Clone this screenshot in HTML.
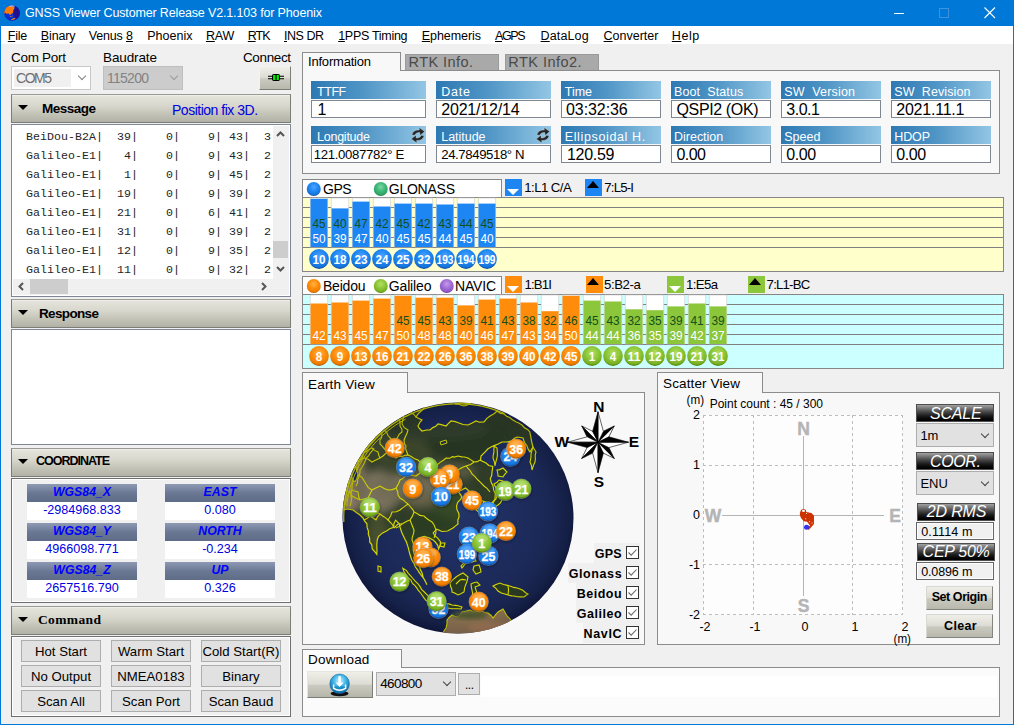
<!DOCTYPE html>
<html><head><meta charset="utf-8"><title>GNSS Viewer</title><style>
*{box-sizing:border-box;margin:0;padding:0}
html,body{width:1014px;height:725px;overflow:hidden;background:#f0f0f0;font-family:"Liberation Sans",sans-serif;font-size:13px;color:#000}
.a{position:absolute}
.t{position:absolute;white-space:nowrap;line-height:1}
u{text-decoration:underline;text-underline-offset:1px}
.hdr{position:absolute;left:11px;width:280px;height:29px;border:1px solid #7d7d78;border-top-color:#9a9a94;background:linear-gradient(#e6e5dd 0%,#d8d7cd 40%,#c4c3b7 70%,#b2b1a5 100%);box-shadow:inset 0 1px 0 #efeee8}
.tri{position:absolute;left:6px;top:10px;width:0;height:0;border-left:5.2px solid transparent;border-right:5.2px solid transparent;border-top:5.6px solid #000}
.box{position:absolute;left:11px;width:280px;border:1px solid #6f6f6f;background:#fff;box-shadow:inset 0 0 0 1px #fff}
.combo{position:absolute;border:1px solid #adadad;background:#e1e1e1}
.btn{position:absolute;border:1px solid #adadad;background:#e1e1e1}
.lbl{position:absolute;height:18px;background:linear-gradient(90deg,#2e79b3 0%,#4f95c6 45%,#93c6e4 100%)}
.val{position:absolute;height:18px;background:#fff;border:1px solid #7f8791}
.panel{position:absolute;border:1px solid #8c8c8c;background:#f8f8f8}
.tab{position:absolute;border:1px solid #8c8c8c;border-bottom:none;background:#f8f8f8}
.chev{position:absolute;width:6px;height:6px;border-right:1px solid #444;border-bottom:1px solid #444;transform:rotate(45deg)}
</style></head><body>
<div class="a" style="left:0;top:0;width:1014px;height:725px;background:#0078d7"></div>
<div class="a" style="left:1px;top:26px;width:1012px;height:698px;background:#f0f0f0"></div>
<svg class="a" style="left:0;top:0" width="26" height="26" viewBox="0 0 26 26"><defs><radialGradient id="ig" cx="35%" cy="55%" r="70%"><stop offset="0" stop-color="#0a3af0"/><stop offset="0.55" stop-color="#0424c0"/><stop offset="1" stop-color="#260e80"/></radialGradient><clipPath id="icp"><circle cx="12" cy="13" r="7.8"/></clipPath></defs><circle cx="12" cy="13" r="7.8" fill="url(#ig)"/><g clip-path="url(#icp)"><path d="M13 10 L20 7 L20 19 L15.5 18 L13.5 14Z" fill="#24108a"/><path d="M3 13 L4.5 8 L8 6 L12 6.5 L14.5 7.2 L14.2 9 L13.2 10.5 L13.4 12 L12.3 13.6 L11 14 L10.6 15 L9.6 14.6 L8.6 13.6 L7.6 13.4 L6.6 14 L5.6 12.8 L4.6 13.4Z" fill="#ff7a08"/><path d="M11.2 19.2 L14 18 L15.8 18.4 L14 19.6 L11.6 19.9Z" fill="#ff8a10"/><path d="M10 16.2 L11.4 16 L11.6 16.8 L10.4 17Z M12.2 16 L13 15.8 L13 16.8Z" fill="#e09020"/><ellipse cx="11.8" cy="5.9" rx="3.2" ry="0.9" fill="#cfe4ff" opacity=".8"/></g></svg>
<div class="t" style="left:25px;top:7px;font-size:12.5px;color:#fff;letter-spacing:-0.15px;">GNSS Viewer Customer Release V2.1.103 for Phoenix</div>
<div class="a" style="left:894px;top:13px;width:10px;height:1px;background:#fff"></div>
<div class="a" style="left:939px;top:8px;width:10px;height:10px;border:1px solid #3d93de"></div>
<svg class="a" style="left:984px;top:7px" width="12" height="12" viewBox="0 0 12 12"><path d="M0.5 0.5 L11 11 M11 0.5 L0.5 11" stroke="#fff" stroke-width="1.1" fill="none"/></svg>
<div class="a" style="left:1px;top:26px;width:1012px;height:18px;background:#fff"></div>
<div class="t" style="left:7.8px;top:30px;font-size:12.5px;letter-spacing:-0.22px;"><u>F</u>ile</div>
<div class="t" style="left:40.8px;top:30px;font-size:12.5px;letter-spacing:-0.13px;"><u>B</u>inary</div>
<div class="t" style="left:88.7px;top:30px;font-size:12.5px;letter-spacing:-0.15px;">Venus <u>8</u></div>
<div class="t" style="left:147.3px;top:30px;font-size:12.5px;letter-spacing:-0.01px;">Phoenix</div>
<div class="t" style="left:205.9px;top:30px;font-size:12.5px;letter-spacing:-0.15px;"><u>R</u>AW</div>
<div class="t" style="left:247.8px;top:30px;font-size:12.5px;letter-spacing:-1.04px;"><u>R</u>TK</div>
<div class="t" style="left:284px;top:30px;font-size:12.5px;letter-spacing:-0.47px;"><u>I</u>NS DR</div>
<div class="t" style="left:338.2px;top:30px;font-size:12.5px;letter-spacing:-0.29px;"><u>1</u>PPS Timing</div>
<div class="t" style="left:421.8px;top:30px;font-size:12.5px;letter-spacing:-0.07px;"><u>E</u>phemeris</div>
<div class="t" style="left:495px;top:30px;font-size:12.5px;letter-spacing:-1.38px;"><u>A</u>GPS</div>
<div class="t" style="left:540.6px;top:30px;font-size:12.5px;letter-spacing:0.12px;"><u>D</u>ataLog</div>
<div class="t" style="left:603.6px;top:30px;font-size:12.5px;letter-spacing:-0.02px;"><u>C</u>onverter</div>
<div class="t" style="left:671.8px;top:30px;font-size:12.5px;letter-spacing:0.56px;"><u>H</u>elp</div>
<div class="t" style="left:11px;top:51px;font-size:13.5px;letter-spacing:-0.29px;">Com Port</div>
<div class="t" style="left:103px;top:51px;font-size:13.5px;letter-spacing:-0.11px;">Baudrate</div>
<div class="t" style="left:243px;top:51px;font-size:13.5px;letter-spacing:-0.38px;">Connect</div>
<div class="combo" style="left:11px;top:66px;width:80px;height:24px;background:#fff;border-color:#c8c8c8"></div>
<div class="a" style="left:14px;top:69px;width:57px;height:18px;background:#f0f0f0"></div>
<div class="t" style="left:16px;top:71px;font-size:14px;color:#6d6d6d;letter-spacing:-1.48px;">COM5</div>
<div class="chev" style="left:79px;top:73px;border-color:#808080"></div>
<div class="combo" style="left:103px;top:66px;width:80px;height:24px;background:#cccccc;border-color:#bfbfbf"></div>
<div class="t" style="left:107px;top:71px;font-size:14px;color:#838383;letter-spacing:-0.74px;">115200</div>
<div class="chev" style="left:170.5px;top:73px;border-color:#9a9a9a"></div>
<div class="a" style="left:259px;top:66px;width:32px;height:24px;border:1px solid #7d7d77;border-top-color:#f4f4ee;border-left-color:#f4f4ee;background:linear-gradient(#efeee8 0%,#dddcd4 48%,#cbcac0 54%,#b9b8ad 100%)"></div>
<svg class="a" style="left:267px;top:73px" width="18" height="9" viewBox="0 0 18 9"><path d="M1 3.3H6M1 5.7H6M12 3.3H17M12 5.7H17" stroke="#000" stroke-width="1.1"/><rect x="5" y="1" width="8" height="7" rx="1.8" fill="#000"/><rect x="6.1" y="2" width="2.3" height="5" fill="#00f000"/><rect x="9.6" y="2" width="2.3" height="5" fill="#00f000"/></svg>
<div class="hdr" style="top:94px"><div class="tri"></div></div>
<div class="t" style="left:42px;top:102px;font-size:13.5px;font-weight:bold;letter-spacing:-0.51px;">Message</div>
<div class="t" style="left:172px;top:103px;font-size:14px;color:#0000e0;letter-spacing:-0.49px;">Position fix 3D.</div>
<div class="box" style="top:124px;height:173px;border-color:#7f8794"></div>
<div class="t" style="left:26px;top:130.5px;font-size:11.6px;font-family:&quot;Liberation Mono&quot;;color:#262626;letter-spacing:0.04px;">BeiDou-B2A|&nbsp;&nbsp;39|&nbsp;&nbsp;&nbsp;&nbsp;0|&nbsp;&nbsp;&nbsp;&nbsp;9|&nbsp;43|&nbsp;&nbsp;3</div>
<div class="t" style="left:26px;top:149.5px;font-size:11.6px;font-family:&quot;Liberation Mono&quot;;color:#262626;letter-spacing:0.04px;">Galileo-E1|&nbsp;&nbsp;&nbsp;4|&nbsp;&nbsp;&nbsp;&nbsp;0|&nbsp;&nbsp;&nbsp;&nbsp;9|&nbsp;43|&nbsp;&nbsp;2</div>
<div class="t" style="left:26px;top:168.5px;font-size:11.6px;font-family:&quot;Liberation Mono&quot;;color:#262626;letter-spacing:0.04px;">Galileo-E1|&nbsp;&nbsp;&nbsp;1|&nbsp;&nbsp;&nbsp;&nbsp;0|&nbsp;&nbsp;&nbsp;&nbsp;9|&nbsp;45|&nbsp;&nbsp;2</div>
<div class="t" style="left:26px;top:187.5px;font-size:11.6px;font-family:&quot;Liberation Mono&quot;;color:#262626;letter-spacing:0.04px;">Galileo-E1|&nbsp;&nbsp;19|&nbsp;&nbsp;&nbsp;&nbsp;0|&nbsp;&nbsp;&nbsp;&nbsp;9|&nbsp;39|&nbsp;&nbsp;2</div>
<div class="t" style="left:26px;top:206.5px;font-size:11.6px;font-family:&quot;Liberation Mono&quot;;color:#262626;letter-spacing:0.04px;">Galileo-E1|&nbsp;&nbsp;21|&nbsp;&nbsp;&nbsp;&nbsp;0|&nbsp;&nbsp;&nbsp;&nbsp;6|&nbsp;41|&nbsp;&nbsp;2</div>
<div class="t" style="left:26px;top:225.5px;font-size:11.6px;font-family:&quot;Liberation Mono&quot;;color:#262626;letter-spacing:0.04px;">Galileo-E1|&nbsp;&nbsp;31|&nbsp;&nbsp;&nbsp;&nbsp;0|&nbsp;&nbsp;&nbsp;&nbsp;9|&nbsp;39|&nbsp;&nbsp;2</div>
<div class="t" style="left:26px;top:244.5px;font-size:11.6px;font-family:&quot;Liberation Mono&quot;;color:#262626;letter-spacing:0.04px;">Galileo-E1|&nbsp;&nbsp;12|&nbsp;&nbsp;&nbsp;&nbsp;0|&nbsp;&nbsp;&nbsp;&nbsp;9|&nbsp;35|&nbsp;&nbsp;2</div>
<div class="t" style="left:26px;top:263.5px;font-size:11.6px;font-family:&quot;Liberation Mono&quot;;color:#262626;letter-spacing:0.04px;">Galileo-E1|&nbsp;&nbsp;11|&nbsp;&nbsp;&nbsp;&nbsp;0|&nbsp;&nbsp;&nbsp;&nbsp;9|&nbsp;32|&nbsp;&nbsp;2</div>
<div class="a" style="left:273px;top:126px;width:16px;height:153px;background:#f0f0f0"></div>
<div class="a" style="left:13px;top:279px;width:276px;height:16px;background:#f0f0f0"></div>
<div class="a" style="left:273px;top:241px;width:15px;height:17px;background:#cdcdcd"></div>
<div class="a" style="left:30px;top:279px;width:38px;height:15px;background:#cdcdcd"></div>
<svg class="a" style="left:276px;top:131px" width="9" height="6" viewBox="0 0 9 6"><path d="M1 5L4.5 1.5L8 5" stroke="#555" stroke-width="2" fill="none"/></svg>
<svg class="a" style="left:276px;top:266px" width="9" height="6" viewBox="0 0 9 6"><path d="M1 1L4.5 4.5L8 1" stroke="#555" stroke-width="2" fill="none"/></svg>
<svg class="a" style="left:18px;top:282px" width="6" height="9" viewBox="0 0 6 9"><path d="M5 1L1.5 4.5L5 8" stroke="#555" stroke-width="2" fill="none"/></svg>
<svg class="a" style="left:261px;top:282px" width="6" height="9" viewBox="0 0 6 9"><path d="M1 1L4.5 4.5L1 8" stroke="#555" stroke-width="2" fill="none"/></svg>
<div class="hdr" style="top:299px"><div class="tri"></div></div>
<div class="t" style="left:39px;top:307px;font-size:13.5px;font-weight:bold;letter-spacing:-0.65px;">Response</div>
<div class="box" style="top:329px;height:116px;border-color:#7f8794"></div>
<div class="hdr" style="top:448px"><div class="tri"></div></div>
<div class="t" style="left:36px;top:455px;font-size:12.5px;font-weight:bold;letter-spacing:-1.01px;">COORDINATE</div>
<div class="box" style="top:478px;height:125px;background:#f0f0f0"></div>
<div class="a" style="left:27px;top:484px;width:110px;height:18px;background:linear-gradient(#8e9ab4,#6b7893 50%,#5f6c88)"></div>
<div class="a" style="left:27px;top:502px;width:110px;height:18px;background:#fff"></div>
<div class="t" style="left:27px;width:110px;top:486px;text-align:center;font-size:12.3px;font-weight:bold;font-style:italic;color:#0000ff">WGS84_X</div>
<div class="t" style="left:27px;width:110px;top:504px;text-align:center;font-size:12.6px;color:#0000e0">-2984968.833</div>
<div class="a" style="left:165px;top:484px;width:110px;height:18px;background:linear-gradient(#8e9ab4,#6b7893 50%,#5f6c88)"></div>
<div class="a" style="left:165px;top:502px;width:110px;height:18px;background:#fff"></div>
<div class="t" style="left:165px;width:110px;top:486px;text-align:center;font-size:12.3px;font-weight:bold;font-style:italic;color:#0000ff">EAST</div>
<div class="t" style="left:165px;width:110px;top:504px;text-align:center;font-size:12.6px;color:#0000e0">0.080</div>
<div class="a" style="left:27px;top:523px;width:110px;height:18px;background:linear-gradient(#8e9ab4,#6b7893 50%,#5f6c88)"></div>
<div class="a" style="left:27px;top:541px;width:110px;height:18px;background:#fff"></div>
<div class="t" style="left:27px;width:110px;top:525px;text-align:center;font-size:12.3px;font-weight:bold;font-style:italic;color:#0000ff">WGS84_Y</div>
<div class="t" style="left:27px;width:110px;top:543px;text-align:center;font-size:12.6px;color:#0000e0">4966098.771</div>
<div class="a" style="left:165px;top:523px;width:110px;height:18px;background:linear-gradient(#8e9ab4,#6b7893 50%,#5f6c88)"></div>
<div class="a" style="left:165px;top:541px;width:110px;height:18px;background:#fff"></div>
<div class="t" style="left:165px;width:110px;top:525px;text-align:center;font-size:12.3px;font-weight:bold;font-style:italic;color:#0000ff">NORTH</div>
<div class="t" style="left:165px;width:110px;top:543px;text-align:center;font-size:12.6px;color:#0000e0">-0.234</div>
<div class="a" style="left:27px;top:562px;width:110px;height:18px;background:linear-gradient(#8e9ab4,#6b7893 50%,#5f6c88)"></div>
<div class="a" style="left:27px;top:580px;width:110px;height:18px;background:#fff"></div>
<div class="t" style="left:27px;width:110px;top:564px;text-align:center;font-size:12.3px;font-weight:bold;font-style:italic;color:#0000ff">WGS84_Z</div>
<div class="t" style="left:27px;width:110px;top:582px;text-align:center;font-size:12.6px;color:#0000e0">2657516.790</div>
<div class="a" style="left:165px;top:562px;width:110px;height:18px;background:linear-gradient(#8e9ab4,#6b7893 50%,#5f6c88)"></div>
<div class="a" style="left:165px;top:580px;width:110px;height:18px;background:#fff"></div>
<div class="t" style="left:165px;width:110px;top:564px;text-align:center;font-size:12.3px;font-weight:bold;font-style:italic;color:#0000ff">UP</div>
<div class="t" style="left:165px;width:110px;top:582px;text-align:center;font-size:12.6px;color:#0000e0">0.326</div>
<div class="hdr" style="top:606px"><div class="tri"></div></div>
<div class="t" style="left:38px;top:613px;font-size:13.5px;font-family:&quot;Liberation Serif&quot;;font-weight:bold;letter-spacing:0.37px;">Command</div>
<div class="box" style="top:636px;height:81px;background:#f0f0f0"></div>
<div class="btn" style="left:21px;top:640px;width:80px;height:22px"></div>
<div class="t" style="left:21px;width:80px;top:644.5px;text-align:center;font-size:13.2px">Hot Start</div>
<div class="btn" style="left:111px;top:640px;width:80px;height:22px"></div>
<div class="t" style="left:111px;width:80px;top:644.5px;text-align:center;font-size:13.2px">Warm Start</div>
<div class="btn" style="left:201px;top:640px;width:80px;height:22px"></div>
<div class="t" style="left:201px;width:80px;top:644.5px;text-align:center;font-size:13.2px">Cold Start(R)</div>
<div class="btn" style="left:21px;top:665px;width:80px;height:22px"></div>
<div class="t" style="left:21px;width:80px;top:669.5px;text-align:center;font-size:13.2px">No Output</div>
<div class="btn" style="left:111px;top:665px;width:80px;height:22px"></div>
<div class="t" style="left:111px;width:80px;top:669.5px;text-align:center;font-size:13.2px">NMEA0183</div>
<div class="btn" style="left:201px;top:665px;width:80px;height:22px"></div>
<div class="t" style="left:201px;width:80px;top:669.5px;text-align:center;font-size:13.2px">Binary</div>
<div class="btn" style="left:21px;top:690px;width:80px;height:22px"></div>
<div class="t" style="left:21px;width:80px;top:694.5px;text-align:center;font-size:13.2px">Scan All</div>
<div class="btn" style="left:111px;top:690px;width:80px;height:22px"></div>
<div class="t" style="left:111px;width:80px;top:694.5px;text-align:center;font-size:13.2px">Scan Port</div>
<div class="btn" style="left:201px;top:690px;width:80px;height:22px"></div>
<div class="t" style="left:201px;width:80px;top:694.5px;text-align:center;font-size:13.2px">Scan Baud</div>
<div class="panel" style="left:302px;top:70px;width:698px;height:104px"></div>
<div class="tab" style="left:302px;top:52px;width:99px;height:19px"></div>
<div class="t" style="left:308px;top:55.4px;font-size:13px;letter-spacing:-0.20px;">Information</div>
<div class="a" style="left:405px;top:54px;width:94px;height:16px;background:#a9a9a9;border:1px solid #9a9a9a;border-bottom:none"></div>
<div class="a" style="left:505px;top:54px;width:94px;height:16px;background:#a9a9a9;border:1px solid #9a9a9a;border-bottom:none"></div>
<div class="t" style="left:408.5px;top:55.33px;font-size:14.5px;color:#4a4a4a;letter-spacing:0.44px;">RTK Info.</div>
<div class="t" style="left:508.3px;top:55.33px;font-size:14.5px;color:#4a4a4a;letter-spacing:0.47px;">RTK Info2.</div>
<div class="lbl" style="left:311px;top:81px;width:115px"></div>
<div class="val" style="left:311px;top:100px;width:115px"></div>
<div class="t" style="left:317px;top:85.82px;font-size:12.5px;color:#fff;letter-spacing:-0.43px;">TTFF</div>
<div class="t" style="left:317.5px;top:102.46px;font-size:16px;letter-spacing:0;">1</div>
<div class="lbl" style="left:436px;top:81px;width:115px"></div>
<div class="val" style="left:436px;top:100px;width:115px"></div>
<div class="t" style="left:441.25px;top:85.82px;font-size:12.5px;color:#fff;letter-spacing:0.78px;">Date</div>
<div class="t" style="left:441.25px;top:102.46px;font-size:16px;letter-spacing:-0.20px;">2021/12/14</div>
<div class="lbl" style="left:561px;top:81px;width:100px"></div>
<div class="val" style="left:561px;top:100px;width:100px"></div>
<div class="t" style="left:564.75px;top:85.82px;font-size:12.5px;color:#fff;letter-spacing:-0.03px;">Time</div>
<div class="t" style="left:566px;top:102.46px;font-size:16px;letter-spacing:-0.08px;">03:32:36</div>
<div class="lbl" style="left:671px;top:81px;width:100px"></div>
<div class="val" style="left:671px;top:100px;width:100px"></div>
<div class="t" style="left:674px;top:85.82px;font-size:12.5px;color:#fff;letter-spacing:0.10px;">Boot&nbsp; Status</div>
<div class="t" style="left:676.5px;top:102.46px;font-size:16px;letter-spacing:-0.37px;">QSPI2 (OK)</div>
<div class="lbl" style="left:781px;top:81px;width:100px"></div>
<div class="val" style="left:781px;top:100px;width:100px"></div>
<div class="t" style="left:784.25px;top:85.82px;font-size:12.5px;color:#fff;letter-spacing:0.20px;">SW&nbsp; Version</div>
<div class="t" style="left:786.25px;top:102.46px;font-size:16px;letter-spacing:-0.46px;">3.0.1</div>
<div class="lbl" style="left:891px;top:81px;width:100px"></div>
<div class="val" style="left:891px;top:100px;width:100px"></div>
<div class="t" style="left:894.25px;top:85.82px;font-size:12.5px;color:#fff;letter-spacing:0.11px;">SW&nbsp; Revision</div>
<div class="t" style="left:896.25px;top:102.46px;font-size:16px;letter-spacing:-0.22px;">2021.11.1</div>
<div class="lbl" style="left:311px;top:126px;width:115px"></div>
<div class="val" style="left:311px;top:145px;width:115px"></div>
<div class="t" style="left:317px;top:130.82px;font-size:12.5px;color:#fff;letter-spacing:-0.24px;">Longitude</div>
<div class="t" style="left:313.75px;top:148.33px;font-size:13.2px;letter-spacing:-0.33px;">121.0087782&deg; E</div>
<div class="lbl" style="left:436px;top:126px;width:115px"></div>
<div class="val" style="left:436px;top:145px;width:115px"></div>
<div class="t" style="left:441.25px;top:130.82px;font-size:12.5px;color:#fff;letter-spacing:-0.03px;">Latitude</div>
<div class="t" style="left:441.25px;top:148.33px;font-size:13.2px;letter-spacing:-0.41px;">24.7849518&deg; N</div>
<div class="lbl" style="left:561px;top:126px;width:100px"></div>
<div class="val" style="left:561px;top:145px;width:100px"></div>
<div class="t" style="left:564.75px;top:130.82px;font-size:12.5px;color:#fff;letter-spacing:0.63px;">Ellipsoidal H.</div>
<div class="t" style="left:567px;top:147.46px;font-size:16px;letter-spacing:-0.29px;">120.59</div>
<div class="lbl" style="left:671px;top:126px;width:100px"></div>
<div class="val" style="left:671px;top:145px;width:100px"></div>
<div class="t" style="left:674px;top:130.82px;font-size:12.5px;color:#fff;letter-spacing:-0.01px;">Direction</div>
<div class="t" style="left:676.5px;top:147.46px;font-size:16px;letter-spacing:-0.55px;">0.00</div>
<div class="lbl" style="left:781px;top:126px;width:100px"></div>
<div class="val" style="left:781px;top:145px;width:100px"></div>
<div class="t" style="left:784.25px;top:130.82px;font-size:12.5px;color:#fff;letter-spacing:0.02px;">Speed</div>
<div class="t" style="left:786.25px;top:147.46px;font-size:16px;letter-spacing:-0.38px;">0.00</div>
<div class="lbl" style="left:891px;top:126px;width:100px"></div>
<div class="val" style="left:891px;top:145px;width:100px"></div>
<div class="t" style="left:894.25px;top:130.82px;font-size:12.5px;color:#fff;letter-spacing:-0.12px;">HDOP</div>
<div class="t" style="left:896.25px;top:147.46px;font-size:16px;letter-spacing:-0.38px;">0.00</div>
<svg class="a" style="left:410.5px;top:126.5px" width="14" height="17" viewBox="0 0 14 17"><g fill="#262626" stroke="#d8e8f2" stroke-width="0.35"><path id="ra" d="M0.9 7.9C1.6 4.6 4.8 2.7 8.4 3.1L8 0.5 13.7 4.6 9.1 8.4 8.8 5.6C6.6 5.3 4.6 6.1 3.7 8.3Z"/><path d="M0.9 7.9C1.6 4.6 4.8 2.7 8.4 3.1L8 0.5 13.7 4.6 9.1 8.4 8.8 5.6C6.6 5.3 4.6 6.1 3.7 8.3Z" transform="rotate(180 7 8.3)"/></g></svg>
<svg class="a" style="left:535.5px;top:126.5px" width="14" height="17" viewBox="0 0 14 17"><g fill="#262626" stroke="#d8e8f2" stroke-width="0.35"><path id="ra" d="M0.9 7.9C1.6 4.6 4.8 2.7 8.4 3.1L8 0.5 13.7 4.6 9.1 8.4 8.8 5.6C6.6 5.3 4.6 6.1 3.7 8.3Z"/><path d="M0.9 7.9C1.6 4.6 4.8 2.7 8.4 3.1L8 0.5 13.7 4.6 9.1 8.4 8.8 5.6C6.6 5.3 4.6 6.1 3.7 8.3Z" transform="rotate(180 7 8.3)"/></g></svg>
<div class="a" style="left:302px;top:179px;width:200px;height:19px;background:#fff;border:1px solid #868686"></div>
<div class="a" style="left:302px;top:197px;width:702px;height:75px;background:#ffffcc;border:1px solid #868686"></div>
<svg class="a" style="left:0;top:0" width="1014" height="725" font-family="Liberation Sans, sans-serif"><defs><radialGradient id="gb" cx="50%" cy="36%" r="66%"><stop offset="0" stop-color="#4da3ff"/><stop offset="0.5" stop-color="#1e86f2"/><stop offset="0.82" stop-color="#1674dc"/><stop offset="1" stop-color="#0b3f8c"/></radialGradient><radialGradient id="go" cx="50%" cy="36%" r="66%"><stop offset="0" stop-color="#ffb347"/><stop offset="0.5" stop-color="#ff8c0a"/><stop offset="0.82" stop-color="#ee7d00"/><stop offset="1" stop-color="#9a4a00"/></radialGradient><radialGradient id="gg" cx="50%" cy="36%" r="66%"><stop offset="0" stop-color="#b4e060"/><stop offset="0.5" stop-color="#8cc63a"/><stop offset="0.82" stop-color="#78b020"/><stop offset="1" stop-color="#43700a"/></radialGradient><radialGradient id="gp" cx="50%" cy="36%" r="66%"><stop offset="0" stop-color="#c79be8"/><stop offset="0.5" stop-color="#a06cd5"/><stop offset="0.82" stop-color="#9058c4"/><stop offset="1" stop-color="#5a2a90"/></radialGradient><radialGradient id="gt" cx="50%" cy="36%" r="66%"><stop offset="0" stop-color="#7fd6a4"/><stop offset="0.5" stop-color="#3cb878"/><stop offset="0.82" stop-color="#2fa567"/><stop offset="1" stop-color="#1a6a3e"/></radialGradient></defs><path d="M303 207.5H1003" stroke="#7f7f7f" stroke-width="1"/><path d="M303 217.5H1003" stroke="#7f7f7f" stroke-width="1"/><path d="M303 227.5H1003" stroke="#7f7f7f" stroke-width="1"/><path d="M303 237.5H1003" stroke="#7f7f7f" stroke-width="1"/><path d="M303 247.5H1003" stroke="#7f7f7f" stroke-width="1"/><g transform="translate(313.75,189)"><circle r="7" fill="url(#gb)"/></g><g transform="translate(380.75,189)"><circle r="7" fill="url(#gt)"/></g><rect x="310.2" y="198" width="17.6" height="49" fill="#fff" stroke="#c9c9c9" stroke-width="0.6"/><rect x="310.5" y="198.8" width="17" height="48.2" fill="#1e86f2"/><text x="319.0" y="227.5" text-anchor="middle" font-size="13" textLength="13.2" lengthAdjust="spacingAndGlyphs" fill="#14501a">45</text><text x="319.0" y="242.5" text-anchor="middle" font-size="13" textLength="13.2" lengthAdjust="spacingAndGlyphs" fill="#fff">50</text><g transform="translate(319.0,259)"><circle r="9.9" fill="url(#gb)"/><text y="4.7" text-anchor="middle" font-size="13" font-weight="bold" fill="#fff" textLength="13" lengthAdjust="spacingAndGlyphs">10</text></g><rect x="331.2" y="198" width="17.6" height="49" fill="#fff" stroke="#c9c9c9" stroke-width="0.6"/><rect x="331.5" y="208.4" width="17" height="38.6" fill="#1e86f2"/><text x="340.0" y="227.5" text-anchor="middle" font-size="13" textLength="13.2" lengthAdjust="spacingAndGlyphs" fill="#14501a">40</text><text x="340.0" y="242.5" text-anchor="middle" font-size="13" textLength="13.2" lengthAdjust="spacingAndGlyphs" fill="#fff">39</text><g transform="translate(340.0,259)"><circle r="9.9" fill="url(#gb)"/><text y="4.7" text-anchor="middle" font-size="13" font-weight="bold" fill="#fff" textLength="13" lengthAdjust="spacingAndGlyphs">18</text></g><rect x="352.2" y="198" width="17.6" height="49" fill="#fff" stroke="#c9c9c9" stroke-width="0.6"/><rect x="352.5" y="201.6" width="17" height="45.4" fill="#1e86f2"/><text x="361.0" y="227.5" text-anchor="middle" font-size="13" textLength="13.2" lengthAdjust="spacingAndGlyphs" fill="#14501a">47</text><text x="361.0" y="242.5" text-anchor="middle" font-size="13" textLength="13.2" lengthAdjust="spacingAndGlyphs" fill="#fff">47</text><g transform="translate(361.0,259)"><circle r="9.9" fill="url(#gb)"/><text y="4.7" text-anchor="middle" font-size="13" font-weight="bold" fill="#fff" textLength="13" lengthAdjust="spacingAndGlyphs">23</text></g><rect x="373.2" y="198" width="17.6" height="49" fill="#fff" stroke="#c9c9c9" stroke-width="0.6"/><rect x="373.5" y="206.5" width="17" height="40.5" fill="#1e86f2"/><text x="382.0" y="227.5" text-anchor="middle" font-size="13" textLength="13.2" lengthAdjust="spacingAndGlyphs" fill="#14501a">42</text><text x="382.0" y="242.5" text-anchor="middle" font-size="13" textLength="13.2" lengthAdjust="spacingAndGlyphs" fill="#fff">40</text><g transform="translate(382.0,259)"><circle r="9.9" fill="url(#gb)"/><text y="4.7" text-anchor="middle" font-size="13" font-weight="bold" fill="#fff" textLength="13" lengthAdjust="spacingAndGlyphs">24</text></g><rect x="394.2" y="198" width="17.6" height="49" fill="#fff" stroke="#c9c9c9" stroke-width="0.6"/><rect x="394.5" y="203.6" width="17" height="43.4" fill="#1e86f2"/><text x="403.0" y="227.5" text-anchor="middle" font-size="13" textLength="13.2" lengthAdjust="spacingAndGlyphs" fill="#14501a">45</text><text x="403.0" y="242.5" text-anchor="middle" font-size="13" textLength="13.2" lengthAdjust="spacingAndGlyphs" fill="#fff">45</text><g transform="translate(403.0,259)"><circle r="9.9" fill="url(#gb)"/><text y="4.7" text-anchor="middle" font-size="13" font-weight="bold" fill="#fff" textLength="13" lengthAdjust="spacingAndGlyphs">25</text></g><rect x="415.2" y="198" width="17.6" height="49" fill="#fff" stroke="#c9c9c9" stroke-width="0.6"/><rect x="415.5" y="203.6" width="17" height="43.4" fill="#1e86f2"/><text x="424.0" y="227.5" text-anchor="middle" font-size="13" textLength="13.2" lengthAdjust="spacingAndGlyphs" fill="#14501a">42</text><text x="424.0" y="242.5" text-anchor="middle" font-size="13" textLength="13.2" lengthAdjust="spacingAndGlyphs" fill="#fff">45</text><g transform="translate(424.0,259)"><circle r="9.9" fill="url(#gb)"/><text y="4.7" text-anchor="middle" font-size="13" font-weight="bold" fill="#fff" textLength="13" lengthAdjust="spacingAndGlyphs">32</text></g><rect x="436.2" y="198" width="17.6" height="49" fill="#fff" stroke="#c9c9c9" stroke-width="0.6"/><rect x="436.5" y="204.5" width="17" height="42.5" fill="#1e86f2"/><text x="445.0" y="227.5" text-anchor="middle" font-size="13" textLength="13.2" lengthAdjust="spacingAndGlyphs" fill="#14501a">43</text><text x="445.0" y="242.5" text-anchor="middle" font-size="13" textLength="13.2" lengthAdjust="spacingAndGlyphs" fill="#fff">44</text><g transform="translate(445.0,259)"><circle r="9.9" fill="url(#gb)"/><text y="4.7" text-anchor="middle" font-size="13" font-weight="bold" fill="#fff" textLength="17" lengthAdjust="spacingAndGlyphs">193</text></g><rect x="457.2" y="198" width="17.6" height="49" fill="#fff" stroke="#c9c9c9" stroke-width="0.6"/><rect x="457.5" y="203.6" width="17" height="43.4" fill="#1e86f2"/><text x="466.0" y="227.5" text-anchor="middle" font-size="13" textLength="13.2" lengthAdjust="spacingAndGlyphs" fill="#14501a">44</text><text x="466.0" y="242.5" text-anchor="middle" font-size="13" textLength="13.2" lengthAdjust="spacingAndGlyphs" fill="#fff">45</text><g transform="translate(466.0,259)"><circle r="9.9" fill="url(#gb)"/><text y="4.7" text-anchor="middle" font-size="13" font-weight="bold" fill="#fff" textLength="17" lengthAdjust="spacingAndGlyphs">194</text></g><rect x="478.2" y="198" width="17.6" height="49" fill="#fff" stroke="#c9c9c9" stroke-width="0.6"/><rect x="478.5" y="203.6" width="17" height="43.4" fill="#1e86f2"/><text x="487.0" y="227.5" text-anchor="middle" font-size="13" textLength="13.2" lengthAdjust="spacingAndGlyphs" fill="#14501a">45</text><text x="487.0" y="242.5" text-anchor="middle" font-size="13" textLength="13.2" lengthAdjust="spacingAndGlyphs" fill="#fff">40</text><g transform="translate(487.0,259)"><circle r="9.9" fill="url(#gb)"/><text y="4.7" text-anchor="middle" font-size="13" font-weight="bold" fill="#fff" textLength="17" lengthAdjust="spacingAndGlyphs">199</text></g></svg>
<div class="t" style="left:323px;top:182.35px;font-size:14px;letter-spacing:-0.49px;">GPS</div>
<div class="t" style="left:388.75px;top:182.35px;font-size:14px;letter-spacing:-0.24px;">GLONASS</div>
<div class="a" style="left:504.9px;top:179.4px;width:17px;height:16.4px;background:#1e86f2"></div>
<div class="a" style="left:507.09999999999997px;top:189px;width:0;height:0;border-left:6.5px solid transparent;border-right:6.5px solid transparent;border-top:6.4px solid #fff"></div>
<div class="t" style="left:524.2px;top:180.53px;font-size:13.2px;letter-spacing:-0.53px;">1:L1 C/A</div>
<div class="a" style="left:585.1px;top:179.4px;width:17px;height:16.4px;background:#1e86f2"></div>
<div class="a" style="left:586.9px;top:181px;width:0;height:0;border-left:6.7px solid transparent;border-right:6.7px solid transparent;border-bottom:7px solid #000"></div>
<div class="t" style="left:604.3px;top:180.53px;font-size:13.2px;letter-spacing:-0.83px;">7:L5-I</div>
<div class="a" style="left:302px;top:276px;width:200px;height:19px;background:#fff;border:1px solid #868686"></div>
<div class="a" style="left:302px;top:294px;width:702px;height:75px;background:#ccffff;border:1px solid #868686"></div>
<svg class="a" style="left:0;top:0" width="1014" height="725" font-family="Liberation Sans, sans-serif"><path d="M303 304.5H1003" stroke="#7f7f7f" stroke-width="1"/><path d="M303 314.5H1003" stroke="#7f7f7f" stroke-width="1"/><path d="M303 324.5H1003" stroke="#7f7f7f" stroke-width="1"/><path d="M303 334.5H1003" stroke="#7f7f7f" stroke-width="1"/><path d="M303 344.5H1003" stroke="#7f7f7f" stroke-width="1"/><g transform="translate(313.75,286)"><circle r="7" fill="url(#go)"/></g><g transform="translate(380.75,286)"><circle r="7" fill="url(#gg)"/></g><g transform="translate(446.75,286)"><circle r="7" fill="url(#gp)"/></g><rect x="310.2" y="295" width="17.6" height="49" fill="#fff" stroke="#c9c9c9" stroke-width="0.6"/><rect x="310.5" y="303.5" width="17" height="40.5" fill="#ff8c0a"/><text x="319.0" y="339.5" text-anchor="middle" font-size="13" textLength="13.2" lengthAdjust="spacingAndGlyphs" fill="#fff">42</text><g transform="translate(319.0,356)"><circle r="9.9" fill="url(#go)"/><text y="4.7" text-anchor="middle" font-size="13" font-weight="bold" fill="#fff" textLength="6.5" lengthAdjust="spacingAndGlyphs">8</text></g><rect x="331.2" y="295" width="17.6" height="49" fill="#fff" stroke="#c9c9c9" stroke-width="0.6"/><rect x="331.5" y="302.5" width="17" height="41.5" fill="#ff8c0a"/><text x="340.0" y="339.5" text-anchor="middle" font-size="13" textLength="13.2" lengthAdjust="spacingAndGlyphs" fill="#fff">43</text><g transform="translate(340.0,356)"><circle r="9.9" fill="url(#go)"/><text y="4.7" text-anchor="middle" font-size="13" font-weight="bold" fill="#fff" textLength="6.5" lengthAdjust="spacingAndGlyphs">9</text></g><rect x="352.2" y="295" width="17.6" height="49" fill="#fff" stroke="#c9c9c9" stroke-width="0.6"/><rect x="352.5" y="300.6" width="17" height="43.4" fill="#ff8c0a"/><text x="361.0" y="339.5" text-anchor="middle" font-size="13" textLength="13.2" lengthAdjust="spacingAndGlyphs" fill="#fff">45</text><g transform="translate(361.0,356)"><circle r="9.9" fill="url(#go)"/><text y="4.7" text-anchor="middle" font-size="13" font-weight="bold" fill="#fff" textLength="13" lengthAdjust="spacingAndGlyphs">13</text></g><rect x="373.2" y="295" width="17.6" height="49" fill="#fff" stroke="#c9c9c9" stroke-width="0.6"/><rect x="373.5" y="298.6" width="17" height="45.4" fill="#ff8c0a"/><text x="382.0" y="339.5" text-anchor="middle" font-size="13" textLength="13.2" lengthAdjust="spacingAndGlyphs" fill="#fff">47</text><g transform="translate(382.0,356)"><circle r="9.9" fill="url(#go)"/><text y="4.7" text-anchor="middle" font-size="13" font-weight="bold" fill="#fff" textLength="13" lengthAdjust="spacingAndGlyphs">16</text></g><rect x="394.2" y="295" width="17.6" height="49" fill="#fff" stroke="#c9c9c9" stroke-width="0.6"/><rect x="394.5" y="295.8" width="17" height="48.2" fill="#ff8c0a"/><text x="403.0" y="324.5" text-anchor="middle" font-size="13" textLength="13.2" lengthAdjust="spacingAndGlyphs" fill="#14501a">45</text><text x="403.0" y="339.5" text-anchor="middle" font-size="13" textLength="13.2" lengthAdjust="spacingAndGlyphs" fill="#fff">50</text><g transform="translate(403.0,356)"><circle r="9.9" fill="url(#go)"/><text y="4.7" text-anchor="middle" font-size="13" font-weight="bold" fill="#fff" textLength="13" lengthAdjust="spacingAndGlyphs">21</text></g><rect x="415.2" y="295" width="17.6" height="49" fill="#fff" stroke="#c9c9c9" stroke-width="0.6"/><rect x="415.5" y="297.7" width="17" height="46.3" fill="#ff8c0a"/><text x="424.0" y="324.5" text-anchor="middle" font-size="13" textLength="13.2" lengthAdjust="spacingAndGlyphs" fill="#14501a">45</text><text x="424.0" y="339.5" text-anchor="middle" font-size="13" textLength="13.2" lengthAdjust="spacingAndGlyphs" fill="#fff">48</text><g transform="translate(424.0,356)"><circle r="9.9" fill="url(#go)"/><text y="4.7" text-anchor="middle" font-size="13" font-weight="bold" fill="#fff" textLength="13" lengthAdjust="spacingAndGlyphs">22</text></g><rect x="436.2" y="295" width="17.6" height="49" fill="#fff" stroke="#c9c9c9" stroke-width="0.6"/><rect x="436.5" y="297.7" width="17" height="46.3" fill="#ff8c0a"/><text x="445.0" y="324.5" text-anchor="middle" font-size="13" textLength="13.2" lengthAdjust="spacingAndGlyphs" fill="#14501a">43</text><text x="445.0" y="339.5" text-anchor="middle" font-size="13" textLength="13.2" lengthAdjust="spacingAndGlyphs" fill="#fff">48</text><g transform="translate(445.0,356)"><circle r="9.9" fill="url(#go)"/><text y="4.7" text-anchor="middle" font-size="13" font-weight="bold" fill="#fff" textLength="13" lengthAdjust="spacingAndGlyphs">26</text></g><rect x="457.2" y="295" width="17.6" height="49" fill="#fff" stroke="#c9c9c9" stroke-width="0.6"/><rect x="457.5" y="305.4" width="17" height="38.6" fill="#ff8c0a"/><text x="466.0" y="324.5" text-anchor="middle" font-size="13" textLength="13.2" lengthAdjust="spacingAndGlyphs" fill="#14501a">39</text><text x="466.0" y="339.5" text-anchor="middle" font-size="13" textLength="13.2" lengthAdjust="spacingAndGlyphs" fill="#fff">40</text><g transform="translate(466.0,356)"><circle r="9.9" fill="url(#go)"/><text y="4.7" text-anchor="middle" font-size="13" font-weight="bold" fill="#fff" textLength="13" lengthAdjust="spacingAndGlyphs">36</text></g><rect x="478.2" y="295" width="17.6" height="49" fill="#fff" stroke="#c9c9c9" stroke-width="0.6"/><rect x="478.5" y="299.6" width="17" height="44.4" fill="#ff8c0a"/><text x="487.0" y="324.5" text-anchor="middle" font-size="13" textLength="13.2" lengthAdjust="spacingAndGlyphs" fill="#14501a">41</text><text x="487.0" y="339.5" text-anchor="middle" font-size="13" textLength="13.2" lengthAdjust="spacingAndGlyphs" fill="#fff">46</text><g transform="translate(487.0,356)"><circle r="9.9" fill="url(#go)"/><text y="4.7" text-anchor="middle" font-size="13" font-weight="bold" fill="#fff" textLength="13" lengthAdjust="spacingAndGlyphs">38</text></g><rect x="499.2" y="295" width="17.6" height="49" fill="#fff" stroke="#c9c9c9" stroke-width="0.6"/><rect x="499.5" y="298.6" width="17" height="45.4" fill="#ff8c0a"/><text x="508.0" y="324.5" text-anchor="middle" font-size="13" textLength="13.2" lengthAdjust="spacingAndGlyphs" fill="#14501a">43</text><text x="508.0" y="339.5" text-anchor="middle" font-size="13" textLength="13.2" lengthAdjust="spacingAndGlyphs" fill="#fff">47</text><g transform="translate(508.0,356)"><circle r="9.9" fill="url(#go)"/><text y="4.7" text-anchor="middle" font-size="13" font-weight="bold" fill="#fff" textLength="13" lengthAdjust="spacingAndGlyphs">39</text></g><rect x="520.2" y="295" width="17.6" height="49" fill="#fff" stroke="#c9c9c9" stroke-width="0.6"/><rect x="520.5" y="302.5" width="17" height="41.5" fill="#ff8c0a"/><text x="529.0" y="324.5" text-anchor="middle" font-size="13" textLength="13.2" lengthAdjust="spacingAndGlyphs" fill="#14501a">38</text><text x="529.0" y="339.5" text-anchor="middle" font-size="13" textLength="13.2" lengthAdjust="spacingAndGlyphs" fill="#fff">43</text><g transform="translate(529.0,356)"><circle r="9.9" fill="url(#go)"/><text y="4.7" text-anchor="middle" font-size="13" font-weight="bold" fill="#fff" textLength="13" lengthAdjust="spacingAndGlyphs">40</text></g><rect x="541.2" y="295" width="17.6" height="49" fill="#fff" stroke="#c9c9c9" stroke-width="0.6"/><rect x="541.5" y="311.2" width="17" height="32.8" fill="#ff8c0a"/><text x="550.0" y="324.5" text-anchor="middle" font-size="13" textLength="13.2" lengthAdjust="spacingAndGlyphs" fill="#14501a">32</text><text x="550.0" y="339.5" text-anchor="middle" font-size="13" textLength="13.2" lengthAdjust="spacingAndGlyphs" fill="#fff">34</text><g transform="translate(550.0,356)"><circle r="9.9" fill="url(#go)"/><text y="4.7" text-anchor="middle" font-size="13" font-weight="bold" fill="#fff" textLength="13" lengthAdjust="spacingAndGlyphs">42</text></g><rect x="562.2" y="295" width="17.6" height="49" fill="#fff" stroke="#c9c9c9" stroke-width="0.6"/><rect x="562.5" y="295.8" width="17" height="48.2" fill="#ff8c0a"/><text x="571.0" y="324.5" text-anchor="middle" font-size="13" textLength="13.2" lengthAdjust="spacingAndGlyphs" fill="#14501a">46</text><text x="571.0" y="339.5" text-anchor="middle" font-size="13" textLength="13.2" lengthAdjust="spacingAndGlyphs" fill="#fff">50</text><g transform="translate(571.0,356)"><circle r="9.9" fill="url(#go)"/><text y="4.7" text-anchor="middle" font-size="13" font-weight="bold" fill="#fff" textLength="13" lengthAdjust="spacingAndGlyphs">45</text></g><rect x="583.2" y="295" width="17.6" height="49" fill="#fff" stroke="#c9c9c9" stroke-width="0.6"/><rect x="583.5" y="300.6" width="17" height="43.4" fill="#8cc63a"/><text x="592.0" y="324.5" text-anchor="middle" font-size="13" textLength="13.2" lengthAdjust="spacingAndGlyphs" fill="#14501a">45</text><text x="592.0" y="339.5" text-anchor="middle" font-size="13" textLength="13.2" lengthAdjust="spacingAndGlyphs" fill="#fff">44</text><g transform="translate(592.0,356)"><circle r="9.9" fill="url(#gg)"/><text y="4.7" text-anchor="middle" font-size="13" font-weight="bold" fill="#fff" textLength="6.5" lengthAdjust="spacingAndGlyphs">1</text></g><rect x="604.2" y="295" width="17.6" height="49" fill="#fff" stroke="#c9c9c9" stroke-width="0.6"/><rect x="604.5" y="301.5" width="17" height="42.5" fill="#8cc63a"/><text x="613.0" y="324.5" text-anchor="middle" font-size="13" textLength="13.2" lengthAdjust="spacingAndGlyphs" fill="#14501a">43</text><text x="613.0" y="339.5" text-anchor="middle" font-size="13" textLength="13.2" lengthAdjust="spacingAndGlyphs" fill="#fff">44</text><g transform="translate(613.0,356)"><circle r="9.9" fill="url(#gg)"/><text y="4.7" text-anchor="middle" font-size="13" font-weight="bold" fill="#fff" textLength="6.5" lengthAdjust="spacingAndGlyphs">4</text></g><rect x="625.2" y="295" width="17.6" height="49" fill="#fff" stroke="#c9c9c9" stroke-width="0.6"/><rect x="625.5" y="309.3" width="17" height="34.7" fill="#8cc63a"/><text x="634.0" y="324.5" text-anchor="middle" font-size="13" textLength="13.2" lengthAdjust="spacingAndGlyphs" fill="#14501a">32</text><text x="634.0" y="339.5" text-anchor="middle" font-size="13" textLength="13.2" lengthAdjust="spacingAndGlyphs" fill="#fff">36</text><g transform="translate(634.0,356)"><circle r="9.9" fill="url(#gg)"/><text y="4.7" text-anchor="middle" font-size="13" font-weight="bold" fill="#fff" textLength="13" lengthAdjust="spacingAndGlyphs">11</text></g><rect x="646.2" y="295" width="17.6" height="49" fill="#fff" stroke="#c9c9c9" stroke-width="0.6"/><rect x="646.5" y="310.2" width="17" height="33.8" fill="#8cc63a"/><text x="655.0" y="324.5" text-anchor="middle" font-size="13" textLength="13.2" lengthAdjust="spacingAndGlyphs" fill="#14501a">35</text><text x="655.0" y="339.5" text-anchor="middle" font-size="13" textLength="13.2" lengthAdjust="spacingAndGlyphs" fill="#fff">35</text><g transform="translate(655.0,356)"><circle r="9.9" fill="url(#gg)"/><text y="4.7" text-anchor="middle" font-size="13" font-weight="bold" fill="#fff" textLength="13" lengthAdjust="spacingAndGlyphs">12</text></g><rect x="667.2" y="295" width="17.6" height="49" fill="#fff" stroke="#c9c9c9" stroke-width="0.6"/><rect x="667.5" y="306.4" width="17" height="37.6" fill="#8cc63a"/><text x="676.0" y="324.5" text-anchor="middle" font-size="13" textLength="13.2" lengthAdjust="spacingAndGlyphs" fill="#14501a">39</text><text x="676.0" y="339.5" text-anchor="middle" font-size="13" textLength="13.2" lengthAdjust="spacingAndGlyphs" fill="#fff">39</text><g transform="translate(676.0,356)"><circle r="9.9" fill="url(#gg)"/><text y="4.7" text-anchor="middle" font-size="13" font-weight="bold" fill="#fff" textLength="13" lengthAdjust="spacingAndGlyphs">19</text></g><rect x="688.2" y="295" width="17.6" height="49" fill="#fff" stroke="#c9c9c9" stroke-width="0.6"/><rect x="688.5" y="303.5" width="17" height="40.5" fill="#8cc63a"/><text x="697.0" y="324.5" text-anchor="middle" font-size="13" textLength="13.2" lengthAdjust="spacingAndGlyphs" fill="#14501a">41</text><text x="697.0" y="339.5" text-anchor="middle" font-size="13" textLength="13.2" lengthAdjust="spacingAndGlyphs" fill="#fff">42</text><g transform="translate(697.0,356)"><circle r="9.9" fill="url(#gg)"/><text y="4.7" text-anchor="middle" font-size="13" font-weight="bold" fill="#fff" textLength="13" lengthAdjust="spacingAndGlyphs">21</text></g><rect x="709.2" y="295" width="17.6" height="49" fill="#fff" stroke="#c9c9c9" stroke-width="0.6"/><rect x="709.5" y="306.4" width="17" height="37.6" fill="#8cc63a"/><text x="718.0" y="324.5" text-anchor="middle" font-size="13" textLength="13.2" lengthAdjust="spacingAndGlyphs" fill="#14501a">39</text><text x="718.0" y="339.5" text-anchor="middle" font-size="13" textLength="13.2" lengthAdjust="spacingAndGlyphs" fill="#fff">37</text><g transform="translate(718.0,356)"><circle r="9.9" fill="url(#gg)"/><text y="4.7" text-anchor="middle" font-size="13" font-weight="bold" fill="#fff" textLength="13" lengthAdjust="spacingAndGlyphs">31</text></g></svg>
<div class="t" style="left:323px;top:279.35px;font-size:14px;letter-spacing:-0.22px;">Beidou</div>
<div class="t" style="left:388.75px;top:279.35px;font-size:14px;letter-spacing:-0.14px;">Galileo</div>
<div class="t" style="left:455px;top:279.35px;font-size:14px;letter-spacing:-0.19px;">NAVIC</div>
<div class="a" style="left:505px;top:276.4px;width:17px;height:16.4px;background:#ff8c0a"></div>
<div class="a" style="left:507.2px;top:286px;width:0;height:0;border-left:6.5px solid transparent;border-right:6.5px solid transparent;border-top:6.4px solid #fff"></div>
<div class="t" style="left:524.5px;top:277.53px;font-size:13.2px;letter-spacing:-0.82px;">1:B1I</div>
<div class="a" style="left:585.5px;top:276.4px;width:17px;height:16.4px;background:#ff8c0a"></div>
<div class="a" style="left:587.3px;top:278px;width:0;height:0;border-left:6.7px solid transparent;border-right:6.7px solid transparent;border-bottom:7px solid #000"></div>
<div class="t" style="left:604px;top:277.53px;font-size:13.2px;letter-spacing:-0.39px;">5:B2-a</div>
<div class="a" style="left:667px;top:276.4px;width:17px;height:16.4px;background:#8cc63a"></div>
<div class="a" style="left:669.2px;top:286px;width:0;height:0;border-left:6.5px solid transparent;border-right:6.5px solid transparent;border-top:6.4px solid #fff"></div>
<div class="t" style="left:686.1px;top:277.53px;font-size:13.2px;letter-spacing:-0.64px;">1:E5a</div>
<div class="a" style="left:747.5px;top:276.4px;width:17px;height:16.4px;background:#8cc63a"></div>
<div class="a" style="left:749.3px;top:278px;width:0;height:0;border-left:6.7px solid transparent;border-right:6.7px solid transparent;border-bottom:7px solid #000"></div>
<div class="t" style="left:766.6px;top:277.53px;font-size:13.2px;letter-spacing:-0.80px;">7:L1-BC</div>
<div class="panel" style="left:302px;top:392px;width:343px;height:253px"></div>
<div class="tab" style="left:302px;top:372px;width:106px;height:21px"></div>
<div class="t" style="left:308px;top:377.97px;font-size:13.5px;letter-spacing:0.19px;">Earth View</div>
<svg class="a" style="left:0;top:0" width="1014" height="725" font-family="Liberation Sans, sans-serif"><defs><clipPath id="gc"><circle cx="458" cy="518" r="115.5"/></clipPath><radialGradient id="oc" cx="50%" cy="48%" r="52%"><stop offset="0" stop-color="#233468"/><stop offset="0.65" stop-color="#1c2a5a"/><stop offset="0.92" stop-color="#18244e"/><stop offset="1" stop-color="#121a3e"/></radialGradient><radialGradient id="limb" cx="50%" cy="50%" r="50%"><stop offset="0.8" stop-color="#000" stop-opacity="0"/><stop offset="1" stop-color="#000420" stop-opacity="0.18"/></radialGradient><filter id="bl" x="-20%" y="-20%" width="140%" height="140%"><feGaussianBlur stdDeviation="4.5"/></filter><filter id="bl2" x="-20%" y="-20%" width="140%" height="140%"><feGaussianBlur stdDeviation="2.2"/></filter><filter id="sh" x="-30%" y="-30%" width="160%" height="160%"><feGaussianBlur stdDeviation="0.8"/></filter></defs><circle cx="458" cy="518" r="115.5" fill="url(#oc)"/><g clip-path="url(#gc)"><path d="M341.0 511.0 L347.0 509.0 L353.0 510.0 L356.3 512.5 L359.7 514.8 L362.8 517.7 L364.5 520.9 L366.9 523.8 L367.1 527.4 L368.5 531.4 L368.3 534.2 L369.6 538.1 L369.8 542.2 L371.7 544.6 L372.3 548.9 L375.3 552.3 L376.8 554.3 L377.0 550.0 L376.8 545.3 L377.2 540.0 L378.6 536.3 L382.6 532.9 L386.6 531.0 L389.7 528.8 L393.8 527.4 L393.9 523.7 L395.6 520.2 L399.2 523.8 L400.5 528.8 L401.9 532.8 L403.4 536.0 L404.8 539.0 L406.3 541.7 L408.1 547.1 L408.9 550.3 L409.9 554.3 L411.7 559.7 L414.3 564.0 L415.3 566.8 L417.6 569.8 L418.9 572.2 L421.3 575.4 L424.3 579.4 L427.0 584.8 L424.7 580.2 L423.0 577.0 L422.3 573.5 L420.7 570.4 L419.5 566.6 L417.1 563.2 L416.5 559.3 L414.4 554.3 L413.2 550.2 L413.5 547.1 L415.3 541.7 L418.9 538.1 L424.3 536.3 L429.7 538.1 L433.0 539.9 L435.0 541.7 L437.7 545.3 L438.6 548.9 L440.3 545.1 L440.4 541.7 L437.7 538.1 L434.8 535.7 L433.2 532.8 L436.8 529.2 L442.0 531.5 L447.6 531.0 L453.0 528.0 L455.9 525.6 L458.0 524.0 L457.8 520.2 L459.0 517.0 L458.9 513.7 L456.8 509.2 L456.6 505.9 L457.7 502.2 L460.6 499.4 L461.9 496.9 L460.2 494.1 L458.3 491.5 L461.4 490.1 L465.5 487.9 L470.0 492.0 L468.4 495.7 L468.0 499.0 L469.9 501.4 L473.0 504.0 L476.0 504.6 L480.0 506.0 L476.0 510.0 L480.5 513.3 L484.0 508.0 L484.2 505.0 L482.9 501.0 L488.0 503.0 L492.8 503.5 L495.0 499.0 L495.3 493.6 L493.8 490.4 L493.0 486.0 L491.2 482.2 L490.3 478.8 L491.7 475.6 L492.0 472.0 L492.8 466.5 L488.8 465.5 L486.0 463.0 L480.5 460.3 L481.0 456.0 L485.4 451.7 L487.7 449.0 L491.0 447.0 L494.8 445.4 L497.7 444.3 L502.0 442.0 L507.6 441.8 L512.0 441.0 L514.4 438.3 L517.4 437.0 L523.0 438.0 L524.3 442.1 L527.0 446.0 L528.1 449.2 L530.0 452.0 L533.0 447.0 L531.8 442.4 L531.0 438.0 L529.8 432.0 L527.9 429.6 L524.7 427.9 L522.0 425.0 L518.3 422.7 L516.3 422.0 L512.5 419.7 L509.3 417.3 L507.2 416.6 L504.0 414.0 L500.0 413.2 L497.0 411.0 L494.1 413.7 L490.0 416.0 L486.9 418.4 L484.0 422.0 L479.3 422.2 L476.0 421.0 L471.6 423.3 L468.0 425.0 L463.1 424.5 L459.0 423.0 L455.2 421.7 L451.0 421.0 L448.0 423.9 L446.0 426.0 L441.3 424.6 L438.0 424.0 L435.4 426.6 L432.8 427.6 L430.0 430.0 L426.7 430.0 L422.0 431.0 L419.2 428.1 L418.0 426.0 L419.9 422.3 L422.0 420.0 L418.5 418.3 L416.0 417.0 L418.1 413.9 L420.0 412.0 L422.3 410.1 L425.0 407.0 L420.0 395.0 L330.0 395.0 L330.0 512.0Z" fill="#2f3c28"/><clipPath id="ac"><path d="M341.0 511.0 L347.0 509.0 L353.0 510.0 L356.3 512.5 L359.7 514.8 L362.8 517.7 L364.5 520.9 L366.9 523.8 L367.1 527.4 L368.5 531.4 L368.3 534.2 L369.6 538.1 L369.8 542.2 L371.7 544.6 L372.3 548.9 L375.3 552.3 L376.8 554.3 L377.0 550.0 L376.8 545.3 L377.2 540.0 L378.6 536.3 L382.6 532.9 L386.6 531.0 L389.7 528.8 L393.8 527.4 L393.9 523.7 L395.6 520.2 L399.2 523.8 L400.5 528.8 L401.9 532.8 L403.4 536.0 L404.8 539.0 L406.3 541.7 L408.1 547.1 L408.9 550.3 L409.9 554.3 L411.7 559.7 L414.3 564.0 L415.3 566.8 L417.6 569.8 L418.9 572.2 L421.3 575.4 L424.3 579.4 L427.0 584.8 L424.7 580.2 L423.0 577.0 L422.3 573.5 L420.7 570.4 L419.5 566.6 L417.1 563.2 L416.5 559.3 L414.4 554.3 L413.2 550.2 L413.5 547.1 L415.3 541.7 L418.9 538.1 L424.3 536.3 L429.7 538.1 L433.0 539.9 L435.0 541.7 L437.7 545.3 L438.6 548.9 L440.3 545.1 L440.4 541.7 L437.7 538.1 L434.8 535.7 L433.2 532.8 L436.8 529.2 L442.0 531.5 L447.6 531.0 L453.0 528.0 L455.9 525.6 L458.0 524.0 L457.8 520.2 L459.0 517.0 L458.9 513.7 L456.8 509.2 L456.6 505.9 L457.7 502.2 L460.6 499.4 L461.9 496.9 L460.2 494.1 L458.3 491.5 L461.4 490.1 L465.5 487.9 L470.0 492.0 L468.4 495.7 L468.0 499.0 L469.9 501.4 L473.0 504.0 L476.0 504.6 L480.0 506.0 L476.0 510.0 L480.5 513.3 L484.0 508.0 L484.2 505.0 L482.9 501.0 L488.0 503.0 L492.8 503.5 L495.0 499.0 L495.3 493.6 L493.8 490.4 L493.0 486.0 L491.2 482.2 L490.3 478.8 L491.7 475.6 L492.0 472.0 L492.8 466.5 L488.8 465.5 L486.0 463.0 L480.5 460.3 L481.0 456.0 L485.4 451.7 L487.7 449.0 L491.0 447.0 L494.8 445.4 L497.7 444.3 L502.0 442.0 L507.6 441.8 L512.0 441.0 L514.4 438.3 L517.4 437.0 L523.0 438.0 L524.3 442.1 L527.0 446.0 L528.1 449.2 L530.0 452.0 L533.0 447.0 L531.8 442.4 L531.0 438.0 L529.8 432.0 L527.9 429.6 L524.7 427.9 L522.0 425.0 L518.3 422.7 L516.3 422.0 L512.5 419.7 L509.3 417.3 L507.2 416.6 L504.0 414.0 L500.0 413.2 L497.0 411.0 L494.1 413.7 L490.0 416.0 L486.9 418.4 L484.0 422.0 L479.3 422.2 L476.0 421.0 L471.6 423.3 L468.0 425.0 L463.1 424.5 L459.0 423.0 L455.2 421.7 L451.0 421.0 L448.0 423.9 L446.0 426.0 L441.3 424.6 L438.0 424.0 L435.4 426.6 L432.8 427.6 L430.0 430.0 L426.7 430.0 L422.0 431.0 L419.2 428.1 L418.0 426.0 L419.9 422.3 L422.0 420.0 L418.5 418.3 L416.0 417.0 L418.1 413.9 L420.0 412.0 L422.3 410.1 L425.0 407.0 L420.0 395.0 L330.0 395.0 L330.0 512.0Z"/></clipPath><g clip-path="url(#ac)" filter="url(#bl)"><ellipse cx="352" cy="470" rx="12" ry="42" fill="#97866a"/><ellipse cx="376" cy="492" rx="26" ry="22" fill="#77705a"/><ellipse cx="408" cy="486" rx="32" ry="14" fill="#6f6a54"/><ellipse cx="442" cy="472" rx="34" ry="9" fill="#5a5a42"/><ellipse cx="398" cy="452" rx="36" ry="16" fill="#3a452c"/><ellipse cx="470" cy="440" rx="44" ry="22" fill="#273422"/><ellipse cx="440" cy="428" rx="50" ry="12" fill="#2e3a2a"/><ellipse cx="456" cy="504" rx="24" ry="16" fill="#364a28"/><ellipse cx="430" cy="528" rx="24" ry="14" fill="#2b3e24"/><ellipse cx="378" cy="536" rx="10" ry="20" fill="#46502f"/><ellipse cx="346" cy="496" rx="7" ry="22" fill="#a8957a"/><ellipse cx="420" cy="500" rx="16" ry="8" fill="#66624a"/><ellipse cx="372" cy="440" rx="20" ry="16" fill="#414b30"/><ellipse cx="412" cy="540" rx="8" ry="14" fill="#2c4024"/></g><path d="M494.0 484.0 L497.1 482.2 L499.0 480.0 L503.0 481.0 L504.2 484.1 L505.0 487.0 L504.1 489.9 L504.0 494.0 L502.4 497.5 L502.0 500.0 L500.2 503.1 L498.0 505.0 L493.0 508.0 L489.0 510.0 L487.0 508.0 L491.0 504.0 L492.9 501.7 L496.0 499.0 L497.0 495.8 L498.0 492.0 L496.0 488.0Z" fill="#2a3a22" stroke="#d6d600" stroke-width="1.1"/><path d="M497.0 470.0 L499.8 469.6 L503.0 468.0 L507.0 472.0 L504.5 474.6 L503.0 477.0 L498.0 476.0 L497.8 473.5Z" fill="#2a3a22" stroke="#d6d600" stroke-width="1.1"/><path d="M494.0 446.0 L497.0 448.0 L497.3 451.6 L497.4 455.2 L497.0 458.0 L495.8 462.2 L495.0 466.0 L494.5 462.4 L493.0 458.0 L493.2 455.3 L493.9 452.1 L493.9 448.9Z" fill="#2a3a22" stroke="#d6d600" stroke-width="1.1"/><path d="M470.0 528.0 L473.0 529.0 L472.6 532.1 L472.0 535.0 L469.0 533.0Z" fill="#2a3a22" stroke="#d6d600" stroke-width="1.1"/><path d="M441.0 543.0 L445.0 543.0 L444.0 547.0 L440.0 546.0Z" fill="#2a3a22" stroke="#d6d600" stroke-width="1.1"/><path d="M468.0 548.0 L472.0 549.0 L472.0 552.7 L473.0 556.0 L476.0 561.0 L472.0 562.0 L471.1 559.5 L469.0 556.0 L468.8 551.9Z" fill="#2a3a22" stroke="#d6d600" stroke-width="1.1"/><path d="M474.0 566.0 L479.0 565.0 L480.3 568.6 L481.0 572.0 L476.0 574.0 L473.0 570.0Z" fill="#2a3a22" stroke="#d6d600" stroke-width="1.1"/><path d="M461.0 566.0 L463.4 563.4 L466.0 560.0 L467.0 562.0 L464.0 565.3 L462.0 568.0Z" fill="#2a3a22" stroke="#d6d600" stroke-width="1.1"/><path d="M450.0 583.0 L452.4 580.1 L456.0 577.0 L459.5 574.7 L463.0 573.0 L465.7 575.0 L468.0 577.0 L467.1 581.0 L466.0 584.0 L464.7 587.4 L464.0 592.0 L460.8 593.7 L458.0 595.0 L454.6 593.1 L452.0 592.0 L451.8 589.2 L450.6 586.5Z" fill="#2a3a22" stroke="#d6d600" stroke-width="1.1"/><path d="M402.8 568.3 L406.3 570.4 L408.3 573.3 L410.4 575.7 L413.4 579.0 L415.3 581.2 L418.0 583.8 L419.9 586.4 L421.6 589.3 L424.3 592.0 L427.9 595.5 L429.9 598.7 L431.0 601.0 L426.0 600.5 L424.5 598.6 L422.2 595.3 L420.6 593.0 L418.5 590.7 L417.1 588.4 L415.0 585.7 L412.4 583.4 L410.9 580.2 L408.1 577.6 L405.4 573.9 L403.7 571.3Z" fill="#2a3a22" stroke="#d6d600" stroke-width="1.1"/><path d="M431.0 603.0 L434.4 602.4 L437.3 603.1 L440.0 603.0 L442.8 603.8 L445.4 603.6 L448.9 603.9 L452.0 605.0 L455.7 605.4 L458.2 605.8 L462.0 607.0 L461.0 609.0 L457.9 608.7 L454.7 608.7 L451.6 608.8 L448.0 608.0 L445.0 607.2 L441.6 606.8 L437.8 606.8 L435.5 606.0 L432.0 606.0Z" fill="#2a3a22" stroke="#d6d600" stroke-width="1.1"/><path d="M471.0 584.0 L473.7 582.8 L477.0 582.0 L480.0 585.0 L475.0 587.0 L476.2 590.5 L477.0 594.0 L473.0 596.0 L472.6 593.3 L472.0 590.0 L471.4 587.4Z" fill="#2a3a22" stroke="#d6d600" stroke-width="1.1"/><path d="M474.0 610.0 L478.5 608.0 L482.0 607.0 L484.0 609.0 L480.5 610.8 L476.0 612.0Z" fill="#2a3a22" stroke="#d6d600" stroke-width="1.1"/><path d="M493.0 586.0 L496.1 584.4 L500.0 583.0 L503.5 584.5 L506.5 585.1 L510.0 586.0 L513.8 587.4 L517.2 588.0 L520.0 589.0 L522.8 590.3 L525.6 592.7 L528.0 594.0 L524.0 597.0 L520.8 596.9 L517.0 596.8 L514.0 596.0 L511.6 595.9 L508.0 595.0 L505.0 594.0 L501.3 593.0 L498.0 591.0 L495.9 588.3Z" fill="#2a3a22" stroke="#d6d600" stroke-width="1.1"/><path d="M378.0 566.0 L381.0 567.0 L381.0 572.0 L378.0 571.0Z" fill="#2a3a22" stroke="#d6d600" stroke-width="1.1"/><path d="M533.0 447.0 L536.0 452.0 L535.2 455.3 L535.4 459.0 L535.0 462.0 L533.5 465.4 L532.0 470.0 L531.4 465.5 L530.0 462.0 L530.9 457.6 L531.0 454.0 L531.8 450.8Z" fill="#2a3a22" stroke="#d6d600" stroke-width="1.1"/><path d="M455.0 404.0 L458.1 402.8 L462.0 402.5 L466.0 403.3 L470.0 403.5 L467.4 405.0 L464.0 406.0 L461.5 405.3 L458.5 404.2Z" fill="#2a3a22" stroke="#d6d600" stroke-width="1.1"/><path d="M447.0 620.0 L449.1 617.5 L452.0 615.0 L454.7 616.3 L458.0 617.0 L460.2 614.5 L462.0 612.0 L466.5 611.1 L470.0 610.0 L472.7 611.3 L476.0 613.0 L479.5 612.6 L482.0 611.0 L484.6 612.5 L488.0 613.0 L491.2 615.5 L493.0 618.0 L495.6 614.6 L498.0 612.0 L503.0 609.0 L505.1 612.5 L507.0 616.0 L509.6 618.3 L512.0 622.0 L515.2 625.0 L517.0 628.0 L518.1 631.4 L519.6 634.0 L521.0 636.4 L522.0 640.0 L519.0 639.9 L516.6 640.6 L512.6 640.0 L509.3 639.9 L507.3 640.6 L503.7 639.7 L500.3 640.2 L498.3 639.5 L495.1 639.3 L491.2 639.6 L488.9 639.8 L485.4 640.2 L482.0 640.3 L479.0 640.0 L476.1 639.6 L473.4 639.9 L470.2 639.9 L467.4 639.5 L463.9 640.2 L461.5 640.0 L458.7 640.2 L455.7 639.6 L452.5 640.4 L449.7 639.7 L445.8 640.6 L442.6 640.7 L440.0 640.0 L442.0 636.5 L442.6 634.3 L444.2 630.4 L446.0 628.0 L447.0 623.9Z" fill="#8f7452" stroke="#d6d600" stroke-width="1.1"/><ellipse cx="470" cy="615" rx="18" ry="4" fill="#4f5a30" filter="url(#bl2)"/><ellipse cx="490" cy="628" rx="22" ry="6" fill="#a67c56" filter="url(#bl2)"/><path d="M341.0 511.0 L347.0 509.0 L353.0 510.0 L356.3 512.5 L359.7 514.8 L362.8 517.7 L364.5 520.9 L366.9 523.8 L367.1 527.4 L368.5 531.4 L368.3 534.2 L369.6 538.1 L369.8 542.2 L371.7 544.6 L372.3 548.9 L375.3 552.3 L376.8 554.3 L377.0 550.0 L376.8 545.3 L377.2 540.0 L378.6 536.3 L382.6 532.9 L386.6 531.0 L389.7 528.8 L393.8 527.4 L393.9 523.7 L395.6 520.2 L399.2 523.8 L400.5 528.8 L401.9 532.8 L403.4 536.0 L404.8 539.0 L406.3 541.7 L408.1 547.1 L408.9 550.3 L409.9 554.3 L411.7 559.7 L414.3 564.0 L415.3 566.8 L417.6 569.8 L418.9 572.2 L421.3 575.4 L424.3 579.4 L427.0 584.8 L424.7 580.2 L423.0 577.0 L422.3 573.5 L420.7 570.4 L419.5 566.6 L417.1 563.2 L416.5 559.3 L414.4 554.3 L413.2 550.2 L413.5 547.1 L415.3 541.7 L418.9 538.1 L424.3 536.3 L429.7 538.1 L433.0 539.9 L435.0 541.7 L437.7 545.3 L438.6 548.9 L440.3 545.1 L440.4 541.7 L437.7 538.1 L434.8 535.7 L433.2 532.8 L436.8 529.2 L442.0 531.5 L447.6 531.0 L453.0 528.0 L455.9 525.6 L458.0 524.0 L457.8 520.2 L459.0 517.0 L458.9 513.7 L456.8 509.2 L456.6 505.9 L457.7 502.2 L460.6 499.4 L461.9 496.9 L460.2 494.1 L458.3 491.5 L461.4 490.1 L465.5 487.9 L470.0 492.0 L468.4 495.7 L468.0 499.0 L469.9 501.4 L473.0 504.0 L476.0 504.6 L480.0 506.0 L476.0 510.0 L480.5 513.3 L484.0 508.0 L484.2 505.0 L482.9 501.0 L488.0 503.0 L492.8 503.5 L495.0 499.0 L495.3 493.6 L493.8 490.4 L493.0 486.0 L491.2 482.2 L490.3 478.8 L491.7 475.6 L492.0 472.0 L492.8 466.5 L488.8 465.5 L486.0 463.0 L480.5 460.3 L481.0 456.0 L485.4 451.7 L487.7 449.0 L491.0 447.0 L494.8 445.4 L497.7 444.3 L502.0 442.0 L507.6 441.8 L512.0 441.0 L514.4 438.3 L517.4 437.0 L523.0 438.0 L524.3 442.1 L527.0 446.0 L528.1 449.2 L530.0 452.0 L533.0 447.0 L531.8 442.4 L531.0 438.0 L529.8 432.0 L527.9 429.6 L524.7 427.9 L522.0 425.0 L518.3 422.7 L516.3 422.0 L512.5 419.7 L509.3 417.3 L507.2 416.6 L504.0 414.0 L500.0 413.2 L497.0 411.0 L494.1 413.7 L490.0 416.0 L486.9 418.4 L484.0 422.0 L479.3 422.2 L476.0 421.0 L471.6 423.3 L468.0 425.0 L463.1 424.5 L459.0 423.0 L455.2 421.7 L451.0 421.0 L448.0 423.9 L446.0 426.0 L441.3 424.6 L438.0 424.0 L435.4 426.6 L432.8 427.6 L430.0 430.0 L426.7 430.0 L422.0 431.0 L419.2 428.1 L418.0 426.0 L419.9 422.3 L422.0 420.0 L418.5 418.3 L416.0 417.0 L418.1 413.9 L420.0 412.0 L422.3 410.1 L425.0 407.0" fill="none" stroke="#d6d600" stroke-width="1.2"/><path d="M384.0 430.0 L386.5 431.9 L387.8 435.3 L389.2 437.0 L392.0 440.0 L391.3 443.7 L390.7 445.4 L389.0 449.4 L388.0 452.0 L390.7 454.3 L392.8 455.3 L396.0 458.0 L398.4 456.5 L402.1 456.5 L405.1 455.2 L408.0 455.0 L410.8 456.2 L415.2 459.1 L418.0 460.0 L420.7 462.7 L421.3 467.4 L424.0 470.0 L427.3 471.8 L430.4 472.6 L434.0 474.0 L437.0 474.4 L440.2 474.2 L443.3 476.1 L446.0 476.0 L448.8 474.6 L453.0 473.2 L456.0 472.0 L458.8 469.5 L462.7 467.2 L466.0 466.0 L470.6 464.5 L474.0 462.0 L477.3 461.6 L480.0 460.0" fill="none" stroke="#d6d600" stroke-width="1.1"/><path d="M424.0 470.0 L421.5 471.8 L418.8 474.0 L416.0 476.0 L412.8 475.5 L408.0 474.0 L404.9 476.7 L403.1 478.4 L400.0 480.0 L398.5 483.8 L396.0 488.0 L392.6 489.6 L388.0 490.0 L384.3 488.4 L380.0 486.0 L376.4 487.8 L372.0 490.0 L370.4 493.3 L368.0 498.0 L363.7 499.0 L360.0 500.0 L355.2 497.8 L352.0 496.0" fill="none" stroke="#d6d600" stroke-width="1.1"/><path d="M396.0 488.0 L397.6 491.5 L398.2 495.4 L400.0 498.0 L402.9 499.7 L405.6 502.1 L408.0 504.0 L410.1 506.5 L412.8 509.6 L414.0 512.0 L412.3 516.4 L410.0 520.0 L406.8 521.2 L402.0 524.0 L399.2 526.4 L396.0 528.0" fill="none" stroke="#d6d600" stroke-width="1.1"/><path d="M368.0 498.0 L368.9 501.2 L369.9 504.2 L372.0 508.0 L374.5 509.4 L376.9 512.6 L380.0 514.0 L382.7 516.0 L386.1 518.1 L388.0 520.0 L390.8 522.9 L392.5 524.7 L394.0 528.0" fill="none" stroke="#d6d600" stroke-width="1.1"/><path d="M414.0 512.0 L417.5 513.7 L419.9 515.4 L424.0 516.0 L426.1 518.0 L428.8 520.0 L432.0 522.0 L434.2 525.3 L436.0 530.0 L435.7 533.9 L434.0 538.0" fill="none" stroke="#d6d600" stroke-width="1.1"/><path d="M410.0 520.0 L411.4 523.5 L412.5 526.3 L414.0 530.0 L413.6 533.4 L412.3 537.0 L412.0 540.0 L413.0 542.6 L414.3 545.9 L416.0 550.0" fill="none" stroke="#d6d600" stroke-width="1.1"/><path d="M352.0 470.0 L354.1 472.4 L357.2 474.6 L360.0 476.0 L362.4 477.9 L364.8 482.0 L366.0 484.0 L368.3 487.6 L372.0 490.0" fill="none" stroke="#d6d600" stroke-width="1.1"/><path d="M344.0 488.0 L346.6 490.6 L350.1 492.9 L352.0 496.0 L351.4 500.0 L351.0 502.6 L350.0 506.0" fill="none" stroke="#d6d600" stroke-width="1.1"/><path d="M466.0 466.0 L468.8 469.2 L470.2 470.7 L472.0 474.0 L475.2 476.9 L478.0 480.0 L480.5 482.3 L484.0 486.0 L487.0 488.4 L490.0 492.0" fill="none" stroke="#d6d600" stroke-width="1.1"/><path d="M434.0 474.0 L435.2 470.9 L436.6 467.0 L438.0 464.0 L440.8 461.9 L443.8 460.0 L446.0 458.0 L449.8 458.2 L452.4 456.6 L454.4 457.1 L458.0 456.0 L461.8 456.9 L464.4 457.0 L468.0 458.0 L471.3 460.1 L474.0 462.0" fill="none" stroke="#d6d600" stroke-width="1.1"/><path d="M398.0 415.0 L398.9 418.6 L400.0 421.3 L400.0 426.0 L401.9 429.2 L402.0 432.0 L399.3 434.0 L397.6 437.2 L396.0 440.0 L392.0 440.0" fill="none" stroke="#d6d600" stroke-width="1.1"/><path d="M356.0 462.0 L360.2 459.4 L364.0 458.0 L368.1 459.3 L372.0 462.0 L375.3 460.3 L380.0 458.0 L382.7 456.2 L385.1 454.0 L388.0 452.0" fill="none" stroke="#d6d600" stroke-width="1.1"/><path d="M424.0 538.0 L425.5 541.7 L428.0 546.0 L426.4 549.5 L424.0 552.0 L420.0 552.0" fill="none" stroke="#d6d600" stroke-width="1.1"/><path d="M456.0 584.0 L460.0 580.0 L462.3 579.4 L466.0 580.0" fill="none" stroke="#d6d600" stroke-width="1.1"/><path d="M508.0 586.0 L508.5 589.2 L508.4 591.5 L508.0 595.0" fill="none" stroke="#d6d600" stroke-width="1.1"/><path d="M347.0 492.0 L347.4 488.1 L348.5 484.8 L348.7 482.3 L349.0 478.0 L349.7 474.6 L351.4 471.7 L351.9 467.3 L353.0 464.0 L353.6 461.8 L354.7 457.7 L356.7 455.6 L358.1 452.5 L359.0 450.0 L361.0 446.7 L361.7 445.1 L363.1 441.9 L365.8 439.9 L367.0 437.0 L368.9 433.7 L371.3 431.9 L373.5 428.1 L376.0 426.0 L379.1 423.6 L382.2 421.7 L384.9 418.4 L387.0 416.0 L390.2 413.9 L392.2 412.3 L395.9 411.4 L398.0 409.0" fill="none" stroke="#d6d600" stroke-width="1.1"/><path d="M351.0 498.0 L351.0 494.6 L351.6 491.4 L352.0 488.2 L352.1 485.3 L353.0 482.0 L354.5 478.9 L355.5 475.7 L355.5 472.8 L357.6 468.9 L358.0 466.0 L358.4 463.2 L360.5 460.5 L362.3 457.8 L363.3 454.1 L364.0 452.0 L366.1 449.7 L367.3 445.8 L370.4 444.4 L372.0 441.0 L373.6 438.7 L375.9 436.4 L379.0 433.1 L381.0 431.0 L382.8 429.4 L385.5 427.4 L387.6 424.7 L390.0 423.0" fill="none" stroke="#d6d600" stroke-width="1.1"/><path d="M356.0 486.0 L357.5 483.1 L357.6 479.7 L358.8 476.7 L359.9 473.1 L360.0 470.0 L362.0 467.3 L363.6 464.5 L365.0 461.6 L366.0 458.0 L368.7 455.7 L370.0 453.3 L372.5 450.4 L374.0 448.0" fill="none" stroke="#d6d600" stroke-width="1.1"/><path d="M345.0 505.0 L345.5 501.4 L346.7 499.8 L347.0 496.0 L349.3 492.5 L352.0 490.0 L354.5 490.9 L358.0 492.0 L358.7 496.8 L360.0 500.0" fill="none" stroke="#d6d600" stroke-width="1.1"/><path d="M362.0 512.0 L363.3 507.7 L366.0 504.0 L368.4 506.2 L372.0 508.0" fill="none" stroke="#d6d600" stroke-width="1.1"/><path d="M376.0 426.0 L378.4 428.2 L379.3 431.3 L382.0 434.0 L381.5 438.0 L379.9 440.0 L380.0 444.0 L382.2 446.2 L384.9 449.7 L388.0 452.0" fill="none" stroke="#d6d600" stroke-width="1.1"/><path d="M359.0 450.0 L362.7 450.6 L366.0 452.0 L368.5 449.6 L372.0 448.0 L374.5 450.4 L378.0 452.0 L378.7 455.1 L380.0 458.0" fill="none" stroke="#d6d600" stroke-width="1.1"/><path d="M398.0 409.0 L401.5 411.5 L404.0 414.0 L406.6 413.6 L410.0 412.0 L413.7 414.2 L416.0 417.0" fill="none" stroke="#d6d600" stroke-width="1.1"/><path d="M404.0 414.0 L403.4 418.1 L402.6 420.2 L402.0 424.0 L404.3 427.7 L408.0 430.0 L407.1 433.1 L405.4 436.7 L404.0 440.0 L404.4 443.8 L405.9 445.6 L405.6 449.0 L407.0 452.5 L408.0 455.0" fill="none" stroke="#d6d600" stroke-width="1.1"/><path d="M364.0 520.0 L367.3 518.2 L370.0 516.0 L372.5 517.5 L376.0 520.0 L377.7 516.6 L380.0 514.0" fill="none" stroke="#d6d600" stroke-width="1.1"/><path d="M388.0 520.0 L390.6 516.0 L392.0 512.0 L396.2 511.8 L400.0 510.0 L402.3 508.1 L404.8 506.4 L408.0 504.0" fill="none" stroke="#d6d600" stroke-width="1.1"/><path d="M394.0 528.0 L398.0 524.0 L402.0 524.0" fill="none" stroke="#d6d600" stroke-width="1.1"/><path d="M352.0 470.0 L356.0 466.0 L356.5 470.3 L358.0 474.0 L356.8 478.3 L355.0 482.0 L352.0 478.0 L351.6 473.8Z" fill="#1c2a58" stroke="#d6d600" stroke-width="1"/><path d="M440 442 L446 440 L447 443 L441 445Z" fill="#1c2a58" stroke="#d6d600" stroke-width="0.9"/><path d="M504.5 413.6 L500.8 412.0 L497.1 410.6 L493.3 409.3 L489.5 408.1 L485.7 407.1 L481.8 406.2 L477.8 405.4 L473.9 404.8 L469.9 404.3 L466.0 404.0 L462.0 403.8 L458.0 403.7 L454.0 403.8 L450.0 404.0 L446.1 404.3 L442.1 404.8 L438.2 405.4 L434.2 406.2 L430.3 407.1 L426.5 408.1 L422.7 409.3 L418.9 410.6 L415.2 412.0 L411.5 413.6 L407.9 415.3 L404.3 417.1 L400.9 419.0 L397.4 421.1 L394.1 423.2 L390.8 425.5 L387.6 427.9 L384.5 430.4 L381.5 433.1 L378.6 435.8 L375.8 438.6 L373.1 441.5 L370.4 444.5 L367.9 447.6 L365.5 450.8 L363.2 454.1 L361.1 457.4 L359.0 460.9 L357.1 464.3 L355.3 467.9 L353.6 471.5 L352.0 475.2 L350.6 478.9 L349.3 482.7 L348.1 486.5 L347.1 490.3 L346.2 494.2 L345.4 498.2 L344.8 502.1 L344.3 506.1 L344.0 510.0 L343.8 514.0 L343.7 518.0 L343.8 522.0" fill="none" stroke="#d6d600" stroke-width="1.3"/><path d="M405.5 419.2 L402.1 421.1 L398.7 423.1 L395.4 425.2 L392.2 427.5 L389.1 429.8 L386.1 432.3 L383.1 434.8 L380.3 437.5 L377.5 440.3 L374.8 443.1 L372.3 446.1 L369.8 449.1 L367.5 452.2 L365.2 455.4 L363.1 458.7 L361.1 462.1 L359.2 465.5 L357.4 468.9 L355.8 472.5 L354.2 476.1 L352.8 479.7 L351.6 483.4 L350.4 487.2 L349.4 490.9 L348.5 494.7 L347.8 498.6 L347.2 502.4 L346.7 506.3" fill="none" stroke="#d6d600" stroke-width="1"/><circle cx="458" cy="518" r="115.5" fill="url(#limb)"/></g><g transform="translate(452.6,484.3)"><circle cx="0.5" cy="1" r="10.3" fill="#000" opacity=".3" filter="url(#sh)"/><circle r="10.2" fill="#d8d8d0" opacity=".45"/><circle r="9.7" fill="url(#go)"/><ellipse cx="0" cy="-4.8" rx="6.4" ry="3.6" fill="#fff" opacity=".16"/><text y="4.8" text-anchor="middle" font-size="13" font-weight="bold" fill="#fff" stroke="#fff" stroke-width="0.25" textLength="13.8" lengthAdjust="spacingAndGlyphs">21</text></g><g transform="translate(449.6,474.4)"><circle cx="0.5" cy="1" r="10.3" fill="#000" opacity=".3" filter="url(#sh)"/><circle r="10.2" fill="#d8d8d0" opacity=".45"/><circle r="9.7" fill="url(#go)"/><ellipse cx="0" cy="-4.8" rx="6.4" ry="3.6" fill="#fff" opacity=".16"/><text y="4.8" text-anchor="middle" font-size="13" font-weight="bold" fill="#fff" stroke="#fff" stroke-width="0.25" textLength="7" lengthAdjust="spacingAndGlyphs">9</text></g><g transform="translate(439.8,478.8)"><circle cx="0.5" cy="1" r="10.3" fill="#000" opacity=".3" filter="url(#sh)"/><circle r="10.2" fill="#d8d8d0" opacity=".45"/><circle r="9.7" fill="url(#go)"/><ellipse cx="0" cy="-4.8" rx="6.4" ry="3.6" fill="#fff" opacity=".16"/><text y="4.8" text-anchor="middle" font-size="13" font-weight="bold" fill="#fff" stroke="#fff" stroke-width="0.25" textLength="13.8" lengthAdjust="spacingAndGlyphs">16</text></g><g transform="translate(394.7,448)"><circle cx="0.5" cy="1" r="10.3" fill="#000" opacity=".3" filter="url(#sh)"/><circle r="10.2" fill="#d8d8d0" opacity=".45"/><circle r="9.7" fill="url(#go)"/><ellipse cx="0" cy="-4.8" rx="6.4" ry="3.6" fill="#fff" opacity=".16"/><text y="4.8" text-anchor="middle" font-size="13" font-weight="bold" fill="#fff" stroke="#fff" stroke-width="0.25" textLength="13.8" lengthAdjust="spacingAndGlyphs">42</text></g><g transform="translate(406,467)"><circle cx="0.5" cy="1" r="10.3" fill="#000" opacity=".3" filter="url(#sh)"/><circle r="10.2" fill="#d8d8d0" opacity=".45"/><circle r="9.7" fill="url(#gb)"/><ellipse cx="0" cy="-4.8" rx="6.4" ry="3.6" fill="#fff" opacity=".16"/><text y="4.8" text-anchor="middle" font-size="13" font-weight="bold" fill="#fff" stroke="#fff" stroke-width="0.25" textLength="13.8" lengthAdjust="spacingAndGlyphs">32</text></g><g transform="translate(428,467)"><circle cx="0.5" cy="1" r="10.3" fill="#000" opacity=".3" filter="url(#sh)"/><circle r="10.2" fill="#d8d8d0" opacity=".45"/><circle r="9.7" fill="url(#gg)"/><ellipse cx="0" cy="-4.8" rx="6.4" ry="3.6" fill="#fff" opacity=".16"/><text y="4.8" text-anchor="middle" font-size="13" font-weight="bold" fill="#fff" stroke="#fff" stroke-width="0.25" textLength="7" lengthAdjust="spacingAndGlyphs">4</text></g><g transform="translate(412.7,488.7)"><circle cx="0.5" cy="1" r="10.3" fill="#000" opacity=".3" filter="url(#sh)"/><circle r="10.2" fill="#d8d8d0" opacity=".45"/><circle r="9.7" fill="url(#go)"/><ellipse cx="0" cy="-4.8" rx="6.4" ry="3.6" fill="#fff" opacity=".16"/><text y="4.8" text-anchor="middle" font-size="13" font-weight="bold" fill="#fff" stroke="#fff" stroke-width="0.25" textLength="7" lengthAdjust="spacingAndGlyphs">9</text></g><g transform="translate(441,496.6)"><circle cx="0.5" cy="1" r="10.3" fill="#000" opacity=".3" filter="url(#sh)"/><circle r="10.2" fill="#d8d8d0" opacity=".45"/><circle r="9.7" fill="url(#gb)"/><ellipse cx="0" cy="-4.8" rx="6.4" ry="3.6" fill="#fff" opacity=".16"/><text y="4.8" text-anchor="middle" font-size="13" font-weight="bold" fill="#fff" stroke="#fff" stroke-width="0.25" textLength="13.8" lengthAdjust="spacingAndGlyphs">10</text></g><g transform="translate(472,500.5)"><circle cx="0.5" cy="1" r="10.3" fill="#000" opacity=".3" filter="url(#sh)"/><circle r="10.2" fill="#d8d8d0" opacity=".45"/><circle r="9.7" fill="url(#go)"/><ellipse cx="0" cy="-4.8" rx="6.4" ry="3.6" fill="#fff" opacity=".16"/><text y="4.8" text-anchor="middle" font-size="13" font-weight="bold" fill="#fff" stroke="#fff" stroke-width="0.25" textLength="13.8" lengthAdjust="spacingAndGlyphs">45</text></g><g transform="translate(487.9,511.4)"><circle cx="0.5" cy="1" r="10.3" fill="#000" opacity=".3" filter="url(#sh)"/><circle r="10.2" fill="#d8d8d0" opacity=".45"/><circle r="9.7" fill="url(#gb)"/><ellipse cx="0" cy="-4.8" rx="6.4" ry="3.6" fill="#fff" opacity=".16"/><text y="4.8" text-anchor="middle" font-size="13" font-weight="bold" fill="#fff" stroke="#fff" stroke-width="0.25" textLength="16.5" lengthAdjust="spacingAndGlyphs">193</text></g><g transform="translate(510.5,456.6)"><circle cx="0.5" cy="1" r="10.3" fill="#000" opacity=".3" filter="url(#sh)"/><circle r="10.2" fill="#d8d8d0" opacity=".45"/><circle r="9.7" fill="url(#gb)"/><ellipse cx="0" cy="-4.8" rx="6.4" ry="3.6" fill="#fff" opacity=".16"/><text y="4.8" text-anchor="middle" font-size="13" font-weight="bold" fill="#fff" stroke="#fff" stroke-width="0.25" textLength="13.8" lengthAdjust="spacingAndGlyphs">24</text></g><g transform="translate(516.2,448.7)"><circle cx="0.5" cy="1" r="10.3" fill="#000" opacity=".3" filter="url(#sh)"/><circle r="10.2" fill="#d8d8d0" opacity=".45"/><circle r="9.7" fill="url(#go)"/><ellipse cx="0" cy="-4.8" rx="6.4" ry="3.6" fill="#fff" opacity=".16"/><text y="4.8" text-anchor="middle" font-size="13" font-weight="bold" fill="#fff" stroke="#fff" stroke-width="0.25" textLength="13.8" lengthAdjust="spacingAndGlyphs">36</text></g><g transform="translate(505.1,490.7)"><circle cx="0.5" cy="1" r="10.3" fill="#000" opacity=".3" filter="url(#sh)"/><circle r="10.2" fill="#d8d8d0" opacity=".45"/><circle r="9.7" fill="url(#gg)"/><ellipse cx="0" cy="-4.8" rx="6.4" ry="3.6" fill="#fff" opacity=".16"/><text y="4.8" text-anchor="middle" font-size="13" font-weight="bold" fill="#fff" stroke="#fff" stroke-width="0.25" textLength="13.8" lengthAdjust="spacingAndGlyphs">19</text></g><g transform="translate(521.4,488.7)"><circle cx="0.5" cy="1" r="10.3" fill="#000" opacity=".3" filter="url(#sh)"/><circle r="10.2" fill="#d8d8d0" opacity=".45"/><circle r="9.7" fill="url(#gg)"/><ellipse cx="0" cy="-4.8" rx="6.4" ry="3.6" fill="#fff" opacity=".16"/><text y="4.8" text-anchor="middle" font-size="13" font-weight="bold" fill="#fff" stroke="#fff" stroke-width="0.25" textLength="13.8" lengthAdjust="spacingAndGlyphs">21</text></g><g transform="translate(369.8,507.2)"><circle cx="0.5" cy="1" r="10.3" fill="#000" opacity=".3" filter="url(#sh)"/><circle r="10.2" fill="#d8d8d0" opacity=".45"/><circle r="9.7" fill="url(#gg)"/><ellipse cx="0" cy="-4.8" rx="6.4" ry="3.6" fill="#fff" opacity=".16"/><text y="4.8" text-anchor="middle" font-size="13" font-weight="bold" fill="#fff" stroke="#fff" stroke-width="0.25" textLength="13.8" lengthAdjust="spacingAndGlyphs">11</text></g><g transform="translate(468.9,536.7)"><circle cx="0.5" cy="1" r="10.3" fill="#000" opacity=".3" filter="url(#sh)"/><circle r="10.2" fill="#d8d8d0" opacity=".45"/><circle r="9.7" fill="url(#gb)"/><ellipse cx="0" cy="-4.8" rx="6.4" ry="3.6" fill="#fff" opacity=".16"/><text y="4.8" text-anchor="middle" font-size="13" font-weight="bold" fill="#fff" stroke="#fff" stroke-width="0.25" textLength="13.8" lengthAdjust="spacingAndGlyphs">23</text></g><g transform="translate(489.8,533.5)"><circle cx="0.5" cy="1" r="10.3" fill="#000" opacity=".3" filter="url(#sh)"/><circle r="10.2" fill="#d8d8d0" opacity=".45"/><circle r="9.7" fill="url(#gb)"/><ellipse cx="0" cy="-4.8" rx="6.4" ry="3.6" fill="#fff" opacity=".16"/><text y="4.8" text-anchor="middle" font-size="13" font-weight="bold" fill="#fff" stroke="#fff" stroke-width="0.25" textLength="16.5" lengthAdjust="spacingAndGlyphs">194</text></g><g transform="translate(505.9,531)"><circle cx="0.5" cy="1" r="10.3" fill="#000" opacity=".3" filter="url(#sh)"/><circle r="10.2" fill="#d8d8d0" opacity=".45"/><circle r="9.7" fill="url(#go)"/><ellipse cx="0" cy="-4.8" rx="6.4" ry="3.6" fill="#fff" opacity=".16"/><text y="4.8" text-anchor="middle" font-size="13" font-weight="bold" fill="#fff" stroke="#fff" stroke-width="0.25" textLength="13.8" lengthAdjust="spacingAndGlyphs">22</text></g><g transform="translate(466.9,554)"><circle cx="0.5" cy="1" r="10.3" fill="#000" opacity=".3" filter="url(#sh)"/><circle r="10.2" fill="#d8d8d0" opacity=".45"/><circle r="9.7" fill="url(#gb)"/><ellipse cx="0" cy="-4.8" rx="6.4" ry="3.6" fill="#fff" opacity=".16"/><text y="4.8" text-anchor="middle" font-size="13" font-weight="bold" fill="#fff" stroke="#fff" stroke-width="0.25" textLength="16.5" lengthAdjust="spacingAndGlyphs">199</text></g><g transform="translate(488.4,555.7)"><circle cx="0.5" cy="1" r="10.3" fill="#000" opacity=".3" filter="url(#sh)"/><circle r="10.2" fill="#d8d8d0" opacity=".45"/><circle r="9.7" fill="url(#gb)"/><ellipse cx="0" cy="-4.8" rx="6.4" ry="3.6" fill="#fff" opacity=".16"/><text y="4.8" text-anchor="middle" font-size="13" font-weight="bold" fill="#fff" stroke="#fff" stroke-width="0.25" textLength="13.8" lengthAdjust="spacingAndGlyphs">25</text></g><g transform="translate(481.7,542.9)"><circle cx="0.5" cy="1" r="10.3" fill="#000" opacity=".3" filter="url(#sh)"/><circle r="10.2" fill="#d8d8d0" opacity=".45"/><circle r="9.7" fill="url(#gg)"/><ellipse cx="0" cy="-4.8" rx="6.4" ry="3.6" fill="#fff" opacity=".16"/><text y="4.8" text-anchor="middle" font-size="13" font-weight="bold" fill="#fff" stroke="#fff" stroke-width="0.25" textLength="7" lengthAdjust="spacingAndGlyphs">1</text></g><g transform="translate(422.5,546.6)"><circle cx="0.5" cy="1" r="10.3" fill="#000" opacity=".3" filter="url(#sh)"/><circle r="10.2" fill="#d8d8d0" opacity=".45"/><circle r="9.7" fill="url(#go)"/><ellipse cx="0" cy="-4.8" rx="6.4" ry="3.6" fill="#fff" opacity=".16"/><text y="4.8" text-anchor="middle" font-size="13" font-weight="bold" fill="#fff" stroke="#fff" stroke-width="0.25" textLength="13.8" lengthAdjust="spacingAndGlyphs">13</text></g><g transform="translate(430.7,557.4)"><circle cx="0.5" cy="1" r="10.3" fill="#000" opacity=".3" filter="url(#sh)"/><circle r="10.2" fill="#d8d8d0" opacity=".45"/><circle r="9.7" fill="url(#go)"/><ellipse cx="0" cy="-4.8" rx="6.4" ry="3.6" fill="#fff" opacity=".16"/></g><g transform="translate(423.3,558.1)"><circle cx="0.5" cy="1" r="10.3" fill="#000" opacity=".3" filter="url(#sh)"/><circle r="10.2" fill="#d8d8d0" opacity=".45"/><circle r="9.7" fill="url(#go)"/><ellipse cx="0" cy="-4.8" rx="6.4" ry="3.6" fill="#fff" opacity=".16"/><text y="4.8" text-anchor="middle" font-size="13" font-weight="bold" fill="#fff" stroke="#fff" stroke-width="0.25" textLength="13.8" lengthAdjust="spacingAndGlyphs">26</text></g><g transform="translate(441.8,576.6)"><circle cx="0.5" cy="1" r="10.3" fill="#000" opacity=".3" filter="url(#sh)"/><circle r="10.2" fill="#d8d8d0" opacity=".45"/><circle r="9.7" fill="url(#go)"/><ellipse cx="0" cy="-4.8" rx="6.4" ry="3.6" fill="#fff" opacity=".16"/><text y="4.8" text-anchor="middle" font-size="13" font-weight="bold" fill="#fff" stroke="#fff" stroke-width="0.25" textLength="13.8" lengthAdjust="spacingAndGlyphs">38</text></g><g transform="translate(399.6,581.6)"><circle cx="0.5" cy="1" r="10.3" fill="#000" opacity=".3" filter="url(#sh)"/><circle r="10.2" fill="#d8d8d0" opacity=".45"/><circle r="9.7" fill="url(#gg)"/><ellipse cx="0" cy="-4.8" rx="6.4" ry="3.6" fill="#fff" opacity=".16"/><text y="4.8" text-anchor="middle" font-size="13" font-weight="bold" fill="#fff" stroke="#fff" stroke-width="0.25" textLength="13.8" lengthAdjust="spacingAndGlyphs">12</text></g><g transform="translate(438.5,608.7)"><circle cx="0.5" cy="1" r="10.3" fill="#000" opacity=".3" filter="url(#sh)"/><circle r="10.2" fill="#d8d8d0" opacity=".45"/><circle r="9.7" fill="url(#gb)"/><ellipse cx="0" cy="-4.8" rx="6.4" ry="3.6" fill="#fff" opacity=".16"/><text y="4.8" text-anchor="middle" font-size="13" font-weight="bold" fill="#fff" stroke="#fff" stroke-width="0.25" textLength="13.8" lengthAdjust="spacingAndGlyphs">32</text></g><g transform="translate(436.6,601.3)"><circle cx="0.5" cy="1" r="10.3" fill="#000" opacity=".3" filter="url(#sh)"/><circle r="10.2" fill="#d8d8d0" opacity=".45"/><circle r="9.7" fill="url(#gg)"/><ellipse cx="0" cy="-4.8" rx="6.4" ry="3.6" fill="#fff" opacity=".16"/><text y="4.8" text-anchor="middle" font-size="13" font-weight="bold" fill="#fff" stroke="#fff" stroke-width="0.25" textLength="13.8" lengthAdjust="spacingAndGlyphs">31</text></g><g transform="translate(478.7,601.8)"><circle cx="0.5" cy="1" r="10.3" fill="#000" opacity=".3" filter="url(#sh)"/><circle r="10.2" fill="#d8d8d0" opacity=".45"/><circle r="9.7" fill="url(#go)"/><ellipse cx="0" cy="-4.8" rx="6.4" ry="3.6" fill="#fff" opacity=".16"/><text y="4.8" text-anchor="middle" font-size="13" font-weight="bold" fill="#fff" stroke="#fff" stroke-width="0.25" textLength="13.8" lengthAdjust="spacingAndGlyphs">40</text></g><g transform="translate(598,442.2)" stroke="#000" stroke-width="0.6" stroke-linejoin="miter"><g transform="rotate(45)"><path d="M0 0 L4.3 -10.4 L0 -23Z" fill="#fff"/><path d="M0 0 L-4.3 -10.4 L0 -23Z" fill="#000"/></g><g transform="rotate(135)"><path d="M0 0 L4.3 -10.4 L0 -23Z" fill="#fff"/><path d="M0 0 L-4.3 -10.4 L0 -23Z" fill="#000"/></g><g transform="rotate(225)"><path d="M0 0 L4.3 -10.4 L0 -23Z" fill="#fff"/><path d="M0 0 L-4.3 -10.4 L0 -23Z" fill="#000"/></g><g transform="rotate(315)"><path d="M0 0 L4.3 -10.4 L0 -23Z" fill="#fff"/><path d="M0 0 L-4.3 -10.4 L0 -23Z" fill="#000"/></g><g transform="rotate(0)"><path d="M0 0 L5.4 -10.8 L0 -30.5Z" fill="#fff"/><path d="M0 0 L-5.4 -10.8 L0 -30.5Z" fill="#000"/></g><g transform="rotate(90)"><path d="M0 0 L5.4 -10.8 L0 -30.5Z" fill="#fff"/><path d="M0 0 L-5.4 -10.8 L0 -30.5Z" fill="#000"/></g><g transform="rotate(180)"><path d="M0 0 L5.4 -10.8 L0 -30.5Z" fill="#fff"/><path d="M0 0 L-5.4 -10.8 L0 -30.5Z" fill="#000"/></g><g transform="rotate(270)"><path d="M0 0 L5.4 -10.8 L0 -30.5Z" fill="#fff"/><path d="M0 0 L-5.4 -10.8 L0 -30.5Z" fill="#000"/></g></g><text x="598.8" y="412" text-anchor="middle" font-size="15.5" font-weight="bold" fill="#000">N</text><text x="599" y="487.4" text-anchor="middle" font-size="15.5" font-weight="bold" fill="#000">S</text><text x="561.7" y="447.4" text-anchor="middle" font-size="15.5" font-weight="bold" fill="#000">W</text><text x="634" y="447.4" text-anchor="middle" font-size="15.5" font-weight="bold" fill="#000">E</text></svg>
<div class="a" style="left:593.7px;top:543px;width:46.299999999999955px;height:20px;background:#f0f0f0"></div>
<div class="a" style="left:626px;top:546px;width:13px;height:13px;background:#fff;border:1px solid #333"></div>
<svg class="a" style="left:626px;top:546px" width="13" height="13" viewBox="0 0 13 13"><path d="M2.5 6.5L5.2 9.2L10.5 3.5" stroke="#6a6a6a" stroke-width="1.1" fill="none"/></svg>
<div class="t" style="left:594.7px;top:548.02px;font-size:12.5px;font-weight:bold;letter-spacing:0.25px;">GPS</div>
<div class="a" style="left:567.7px;top:563px;width:72.29999999999995px;height:20px;background:#f0f0f0"></div>
<div class="a" style="left:626px;top:566px;width:13px;height:13px;background:#fff;border:1px solid #333"></div>
<svg class="a" style="left:626px;top:566px" width="13" height="13" viewBox="0 0 13 13"><path d="M2.5 6.5L5.2 9.2L10.5 3.5" stroke="#6a6a6a" stroke-width="1.1" fill="none"/></svg>
<div class="t" style="left:568.7px;top:568.02px;font-size:12.5px;font-weight:bold;letter-spacing:0.60px;">Glonass</div>
<div class="a" style="left:575.8px;top:583px;width:64.20000000000005px;height:20px;background:#f0f0f0"></div>
<div class="a" style="left:626px;top:586px;width:13px;height:13px;background:#fff;border:1px solid #333"></div>
<svg class="a" style="left:626px;top:586px" width="13" height="13" viewBox="0 0 13 13"><path d="M2.5 6.5L5.2 9.2L10.5 3.5" stroke="#6a6a6a" stroke-width="1.1" fill="none"/></svg>
<div class="t" style="left:576.8px;top:588.02px;font-size:12.5px;font-weight:bold;letter-spacing:0.49px;">Beidou</div>
<div class="a" style="left:575.8px;top:603px;width:64.20000000000005px;height:20px;background:#f0f0f0"></div>
<div class="a" style="left:626px;top:606px;width:13px;height:13px;background:#fff;border:1px solid #333"></div>
<svg class="a" style="left:626px;top:606px" width="13" height="13" viewBox="0 0 13 13"><path d="M2.5 6.5L5.2 9.2L10.5 3.5" stroke="#6a6a6a" stroke-width="1.1" fill="none"/></svg>
<div class="t" style="left:576.8px;top:608.02px;font-size:12.5px;font-weight:bold;letter-spacing:0.52px;">Galileo</div>
<div class="a" style="left:582.6px;top:623px;width:57.39999999999998px;height:20px;background:#f0f0f0"></div>
<div class="a" style="left:626px;top:626px;width:13px;height:13px;background:#fff;border:1px solid #333"></div>
<svg class="a" style="left:626px;top:626px" width="13" height="13" viewBox="0 0 13 13"><path d="M2.5 6.5L5.2 9.2L10.5 3.5" stroke="#6a6a6a" stroke-width="1.1" fill="none"/></svg>
<div class="t" style="left:583.6px;top:628.02px;font-size:12.5px;font-weight:bold;letter-spacing:0.64px;">NavIC</div>
<div class="panel" style="left:657px;top:392px;width:343px;height:253px"></div>
<div class="tab" style="left:657px;top:372px;width:106px;height:21px"></div>
<div class="t" style="left:663px;top:377.17px;font-size:13.5px;letter-spacing:0.13px;">Scatter View</div>
<svg class="a" style="left:0;top:0" width="1014" height="725" font-family="Liberation Sans, sans-serif"><rect x="703" y="415" width="200" height="200" fill="#fdfdfd"/><path d="M703.5 415V615" stroke="#bdbdbd" stroke-width="1" stroke-dasharray="3 3"/><path d="M703 415.5H903" stroke="#bdbdbd" stroke-width="1" stroke-dasharray="3 3"/><path d="M753.5 415V615" stroke="#bdbdbd" stroke-width="1" stroke-dasharray="3 3"/><path d="M703 465.5H903" stroke="#bdbdbd" stroke-width="1" stroke-dasharray="3 3"/><path d="M852.5 415V615" stroke="#bdbdbd" stroke-width="1" stroke-dasharray="3 3"/><path d="M703 564.5H903" stroke="#bdbdbd" stroke-width="1" stroke-dasharray="3 3"/><path d="M902.5 415V615" stroke="#bdbdbd" stroke-width="1" stroke-dasharray="3 3"/><path d="M703 614.5H903" stroke="#bdbdbd" stroke-width="1" stroke-dasharray="3 3"/><path d="M803.5 436V596" stroke="#b4b4b4" stroke-width="1"/><path d="M722 515.5H884" stroke="#b4b4b4" stroke-width="1"/><text x="803.5" y="434.5" text-anchor="middle" font-size="17.5" font-weight="bold" fill="#b4b4b4" stroke="#b4b4b4" stroke-width="0.4">N</text><text x="803.5" y="612" text-anchor="middle" font-size="17.5" font-weight="bold" fill="#b4b4b4" stroke="#b4b4b4" stroke-width="0.4">S</text><text x="713" y="522" text-anchor="middle" font-size="17.5" font-weight="bold" fill="#b4b4b4" stroke="#b4b4b4" stroke-width="0.4">W</text><text x="895" y="522" text-anchor="middle" font-size="17.5" font-weight="bold" fill="#b4b4b4" stroke="#b4b4b4" stroke-width="0.4">E</text><text x="700" y="419" text-anchor="end" font-size="12.5" fill="#000">2</text><text x="700" y="469" text-anchor="end" font-size="12.5" fill="#000">1</text><text x="700" y="519" text-anchor="end" font-size="12.5" fill="#000">0</text><text x="700" y="569" text-anchor="end" font-size="12.5" fill="#000">-1</text><text x="700" y="619" text-anchor="end" font-size="12.5" fill="#000">-2</text><text x="705" y="630.5" text-anchor="middle" font-size="12.5" fill="#000">-2</text><text x="755" y="630.5" text-anchor="middle" font-size="12.5" fill="#000">-1</text><text x="805" y="630.5" text-anchor="middle" font-size="12.5" fill="#000">0</text><text x="855" y="630.5" text-anchor="middle" font-size="12.5" fill="#000">1</text><text x="905" y="630.5" text-anchor="middle" font-size="12.5" fill="#000">2</text><text x="686.6" y="403.8" font-size="12.5" textLength="17.5" lengthAdjust="spacingAndGlyphs" fill="#000">(m)</text><text x="893.5" y="642.5" font-size="12.5" textLength="17.5" lengthAdjust="spacingAndGlyphs" fill="#000">(m)</text><text x="709.7" y="408" font-size="12" textLength="113.3" lengthAdjust="spacingAndGlyphs" fill="#000">Point count : 45 / 300</text><path d="M801.00 509.97 L803.48 508.86 L805.97 509.97 L806.24 511.90 L811.48 513.00 L813.97 515.76 L813.97 524.03 L808.72 530.10 L807.07 527.90 L809.28 524.59 L807.07 521.83 L803.76 521.28 L801.00 517.97 L799.90 515.21 L799.90 513.00Z" fill="#cc3300"/><ellipse cx="803.48" cy="510.90" rx="1.5" ry="1.1" fill="#fff"/><circle cx="806.52" cy="513.55" r="0.55" fill="#fff"/><circle cx="805.69" cy="518.79" r="0.55" fill="#fff"/><circle cx="809.55" cy="521.55" r="0.55" fill="#fff"/><circle cx="812.03" cy="522.93" r="0.55" fill="#fff"/><circle cx="809.55" cy="525.41" r="0.55" fill="#fff"/><circle cx="806.52" cy="527.34" r="2.5" fill="#3333ee"/></svg>
<div class="a" style="left:916px;top:404px;width:78px;height:17.6px;background:linear-gradient(#a2a2a2 0%,#747474 22%,#444 45%,#1c1c1c 68%,#050505 88%,#000 100%);border:1px solid #4e4e4e"></div>
<div class="t" style="left:930px;top:405.66px;font-size:16px;font-style:italic;color:#fff;letter-spacing:-0.19px;">SCALE</div>
<div class="combo" style="left:916px;top:423px;width:78px;height:24px"></div>
<div class="t" style="left:920.4px;top:428.8px;font-size:13px;letter-spacing:0;">1m</div>
<div class="chev" style="left:982px;top:431px"></div>
<div class="a" style="left:916px;top:452.4px;width:78px;height:17.4px;background:linear-gradient(#a2a2a2 0%,#747474 22%,#444 45%,#1c1c1c 68%,#050505 88%,#000 100%);border:1px solid #4e4e4e"></div>
<div class="t" style="left:930px;top:454.06px;font-size:16px;font-style:italic;color:#fff;letter-spacing:-0.36px;">COOR.</div>
<div class="combo" style="left:916px;top:471px;width:78px;height:24px"></div>
<div class="t" style="left:920.4px;top:476.8px;font-size:13px;letter-spacing:0;">ENU</div>
<div class="chev" style="left:982px;top:479px"></div>
<div class="a" style="left:917px;top:503.2px;width:78px;height:17.4px;background:linear-gradient(#a2a2a2 0%,#747474 22%,#444 45%,#1c1c1c 68%,#050505 88%,#000 100%);border:1px solid #4e4e4e"></div>
<div class="t" style="left:926.8px;top:504.26px;font-size:16px;font-style:italic;color:#fff;letter-spacing:-0.19px;">2D RMS</div>
<div class="a" style="left:916px;top:522px;width:78px;height:18px;background:#f0f0f0;border:1px solid #666;box-shadow:inset 0 0 0 1px #fcfcfc"></div>
<div class="t" style="left:921.2px;top:526.22px;font-size:12.5px;letter-spacing:0.15px;">0.1114 m</div>
<div class="a" style="left:917px;top:543px;width:78px;height:17.6px;background:linear-gradient(#a2a2a2 0%,#747474 22%,#444 45%,#1c1c1c 68%,#050505 88%,#000 100%);border:1px solid #4e4e4e"></div>
<div class="t" style="left:922.6px;top:544.06px;font-size:16px;font-style:italic;color:#fff;letter-spacing:-0.26px;">CEP 50%</div>
<div class="a" style="left:916px;top:562px;width:78px;height:18px;background:#f0f0f0;border:1px solid #666;box-shadow:inset 0 0 0 1px #fcfcfc"></div>
<div class="t" style="left:921.2px;top:566.02px;font-size:12.5px;letter-spacing:-0.12px;">0.0896 m</div>
<div class="a" style="left:926px;top:586px;width:67px;height:24px;border:1px solid #85857f;border-top-color:#d8d8d2;border-left-color:#d8d8d2;background:linear-gradient(#efeee8 0%,#dddcd4 48%,#cac9bf 54%,#b9b8ad 100%)"></div>
<div class="t" style="left:931.7px;top:591.02px;font-size:12.5px;font-weight:bold;letter-spacing:-0.44px;">Set Origin</div>
<div class="a" style="left:926px;top:614px;width:67px;height:24px;border:1px solid #85857f;border-top-color:#d8d8d2;border-left-color:#d8d8d2;background:linear-gradient(#efeee8 0%,#dddcd4 48%,#cac9bf 54%,#b9b8ad 100%)"></div>
<div class="t" style="left:944px;top:620.02px;font-size:12.5px;font-weight:bold;letter-spacing:0.35px;">Clear</div>
<div class="panel" style="left:302px;top:667px;width:698px;height:50px;background:#fbfbfb"></div>
<div class="tab" style="left:302px;top:649px;width:100px;height:19px;background:#fbfbfb"></div>
<div class="t" style="left:308px;top:652.87px;font-size:13.5px;letter-spacing:0.19px;">Download</div>
<div class="a" style="left:481px;top:676px;width:516px;height:21px;background:#fff"></div>
<div class="a" style="left:307px;top:671px;width:66px;height:27px;border:1px solid #7d7d77;border-top-color:#e6e6e0;border-left-color:#e6e6e0;background:linear-gradient(#efeee8 0%,#dddcd4 48%,#cbcac0 54%,#b6b5aa 100%)"></div>
<svg class="a" style="left:327px;top:671px" width="26" height="27" viewBox="0 0 26 27"><defs><radialGradient id="dg" cx="50%" cy="35%" r="65%"><stop offset="0" stop-color="#c8f4ff"/><stop offset="0.5" stop-color="#3cb4e6"/><stop offset="1" stop-color="#0f5f9e"/></radialGradient></defs><ellipse cx="12.6" cy="22.6" rx="9" ry="2.6" fill="#111"/><circle cx="12.6" cy="12.8" r="9.8" fill="url(#dg)" stroke="#1a6ea8" stroke-width="0.6"/><ellipse cx="12.6" cy="18" rx="6.5" ry="3.2" fill="#0a7ab8" opacity=".55"/><path d="M11.4 5.2H13.8V11.6H16.6L12.6 16L8.6 11.6H11.4Z" fill="#fff"/><path d="M6.6 13.5V17.4Q12.6 21 18.6 17.4V13.5" fill="none" stroke="#fff" stroke-width="1.5"/></svg>
<div class="combo" style="left:376px;top:672px;width:80px;height:24px"></div>
<div class="t" style="left:380.2px;top:677.37px;font-size:13.5px;letter-spacing:-0.61px;">460800</div>
<div class="chev" style="left:443.5px;top:679px"></div>
<div class="btn" style="left:458px;top:673px;width:22px;height:22px"></div>
<div class="t" style="left:465px;top:679.34px;font-size:12px;letter-spacing:-0.51px;">...</div>
</body></html>
